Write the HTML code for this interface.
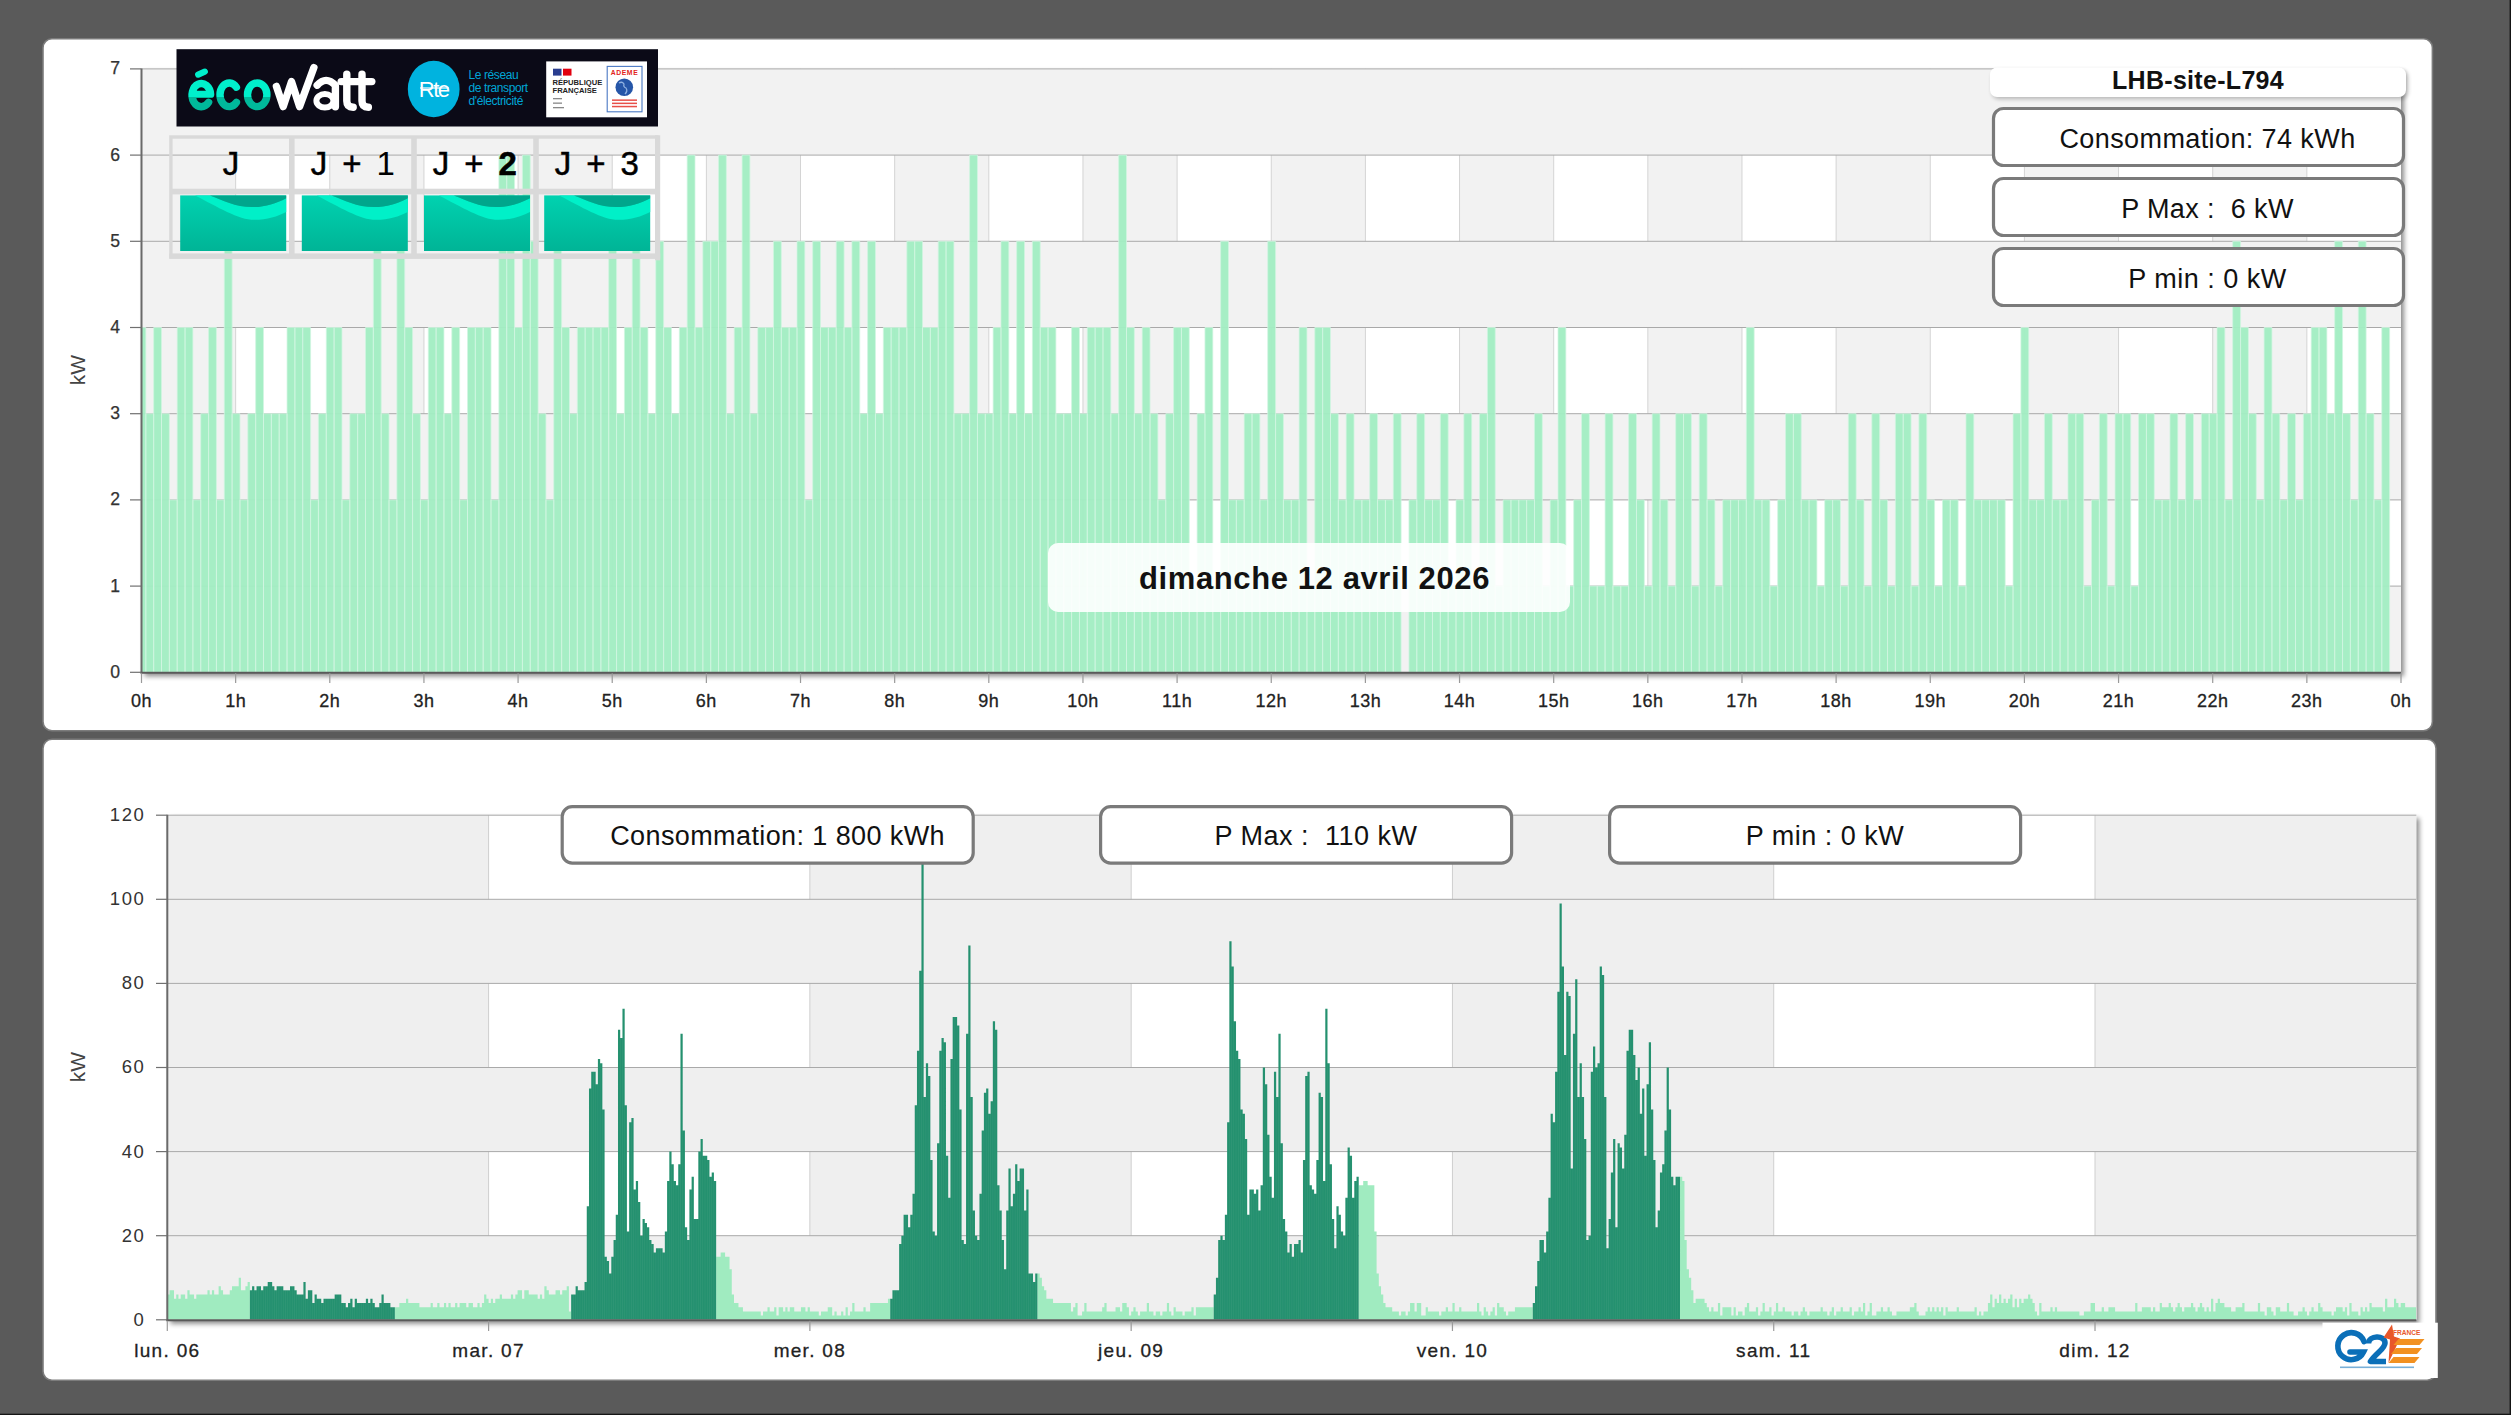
<!DOCTYPE html><html><head><meta charset="utf-8"><style>html,body{margin:0;padding:0;background:#5a5a5a;width:2511px;height:1415px;overflow:hidden;position:relative}</style></head><body><svg width="2511" height="1415" viewBox="0 0 2511 1415" style="position:absolute;left:0;top:0">
<defs><filter id="blur3" x="-10%" y="-10%" width="120%" height="120%"><feGaussianBlur stdDeviation="2.6"/></filter><filter id="blur2" x="-10%" y="-50%" width="120%" height="200%"><feGaussianBlur stdDeviation="1.8"/></filter><clipPath id="ctop"><rect x="141.5" y="68.89999999999998" width="2259.5" height="603.4"/></clipPath><clipPath id="cbot"><rect x="167.3" y="815.1999999999999" width="2249.0" height="504.6"/></clipPath><linearGradient id="wave" x1="0" y1="0" x2="0" y2="1"><stop offset="0" stop-color="#00d2b0"/><stop offset="1" stop-color="#00b496"/></linearGradient><linearGradient id="ecoL" x1="0" y1="0" x2="0" y2="1"><stop offset="0.5" stop-color="#00f0cc"/><stop offset="0.5" stop-color="#00b99a"/></linearGradient></defs>
<rect x="43" y="38.8" width="2389.4" height="692" rx="9" fill="#ffffff" stroke="#7c7c7c" stroke-width="1.6"/>
<rect x="43" y="739.2" width="2393" height="641" rx="9" fill="#ffffff" stroke="#7c7c7c" stroke-width="1.6"/>
<rect x="144.5" y="71.89999999999998" width="2259.5" height="604.4" fill="#000" opacity="0.45" filter="url(#blur3)"/>
<rect x="141.5" y="68.89999999999998" width="2259.5" height="603.4" fill="#ffffff"/>
<rect x="141.50" y="68.90" width="94.15" height="603.40" fill="#f2f2f2"/>
<rect x="329.79" y="68.90" width="94.15" height="603.40" fill="#f2f2f2"/>
<rect x="518.08" y="68.90" width="94.15" height="603.40" fill="#f2f2f2"/>
<rect x="706.38" y="68.90" width="94.15" height="603.40" fill="#f2f2f2"/>
<rect x="894.67" y="68.90" width="94.15" height="603.40" fill="#f2f2f2"/>
<rect x="1082.96" y="68.90" width="94.15" height="603.40" fill="#f2f2f2"/>
<rect x="1271.25" y="68.90" width="94.15" height="603.40" fill="#f2f2f2"/>
<rect x="1459.54" y="68.90" width="94.15" height="603.40" fill="#f2f2f2"/>
<rect x="1647.83" y="68.90" width="94.15" height="603.40" fill="#f2f2f2"/>
<rect x="1836.12" y="68.90" width="94.15" height="603.40" fill="#f2f2f2"/>
<rect x="2024.42" y="68.90" width="94.15" height="603.40" fill="#f2f2f2"/>
<rect x="2212.71" y="68.90" width="94.15" height="603.40" fill="#f2f2f2"/>
<line x1="235.65" y1="68.90" x2="235.65" y2="672.30" stroke="#d4d4d4" stroke-width="1"/>
<line x1="329.79" y1="68.90" x2="329.79" y2="672.30" stroke="#d4d4d4" stroke-width="1"/>
<line x1="423.94" y1="68.90" x2="423.94" y2="672.30" stroke="#d4d4d4" stroke-width="1"/>
<line x1="518.08" y1="68.90" x2="518.08" y2="672.30" stroke="#d4d4d4" stroke-width="1"/>
<line x1="612.23" y1="68.90" x2="612.23" y2="672.30" stroke="#d4d4d4" stroke-width="1"/>
<line x1="706.38" y1="68.90" x2="706.38" y2="672.30" stroke="#d4d4d4" stroke-width="1"/>
<line x1="800.52" y1="68.90" x2="800.52" y2="672.30" stroke="#d4d4d4" stroke-width="1"/>
<line x1="894.67" y1="68.90" x2="894.67" y2="672.30" stroke="#d4d4d4" stroke-width="1"/>
<line x1="988.81" y1="68.90" x2="988.81" y2="672.30" stroke="#d4d4d4" stroke-width="1"/>
<line x1="1082.96" y1="68.90" x2="1082.96" y2="672.30" stroke="#d4d4d4" stroke-width="1"/>
<line x1="1177.10" y1="68.90" x2="1177.10" y2="672.30" stroke="#d4d4d4" stroke-width="1"/>
<line x1="1271.25" y1="68.90" x2="1271.25" y2="672.30" stroke="#d4d4d4" stroke-width="1"/>
<line x1="1365.40" y1="68.90" x2="1365.40" y2="672.30" stroke="#d4d4d4" stroke-width="1"/>
<line x1="1459.54" y1="68.90" x2="1459.54" y2="672.30" stroke="#d4d4d4" stroke-width="1"/>
<line x1="1553.69" y1="68.90" x2="1553.69" y2="672.30" stroke="#d4d4d4" stroke-width="1"/>
<line x1="1647.83" y1="68.90" x2="1647.83" y2="672.30" stroke="#d4d4d4" stroke-width="1"/>
<line x1="1741.98" y1="68.90" x2="1741.98" y2="672.30" stroke="#d4d4d4" stroke-width="1"/>
<line x1="1836.12" y1="68.90" x2="1836.12" y2="672.30" stroke="#d4d4d4" stroke-width="1"/>
<line x1="1930.27" y1="68.90" x2="1930.27" y2="672.30" stroke="#d4d4d4" stroke-width="1"/>
<line x1="2024.42" y1="68.90" x2="2024.42" y2="672.30" stroke="#d4d4d4" stroke-width="1"/>
<line x1="2118.56" y1="68.90" x2="2118.56" y2="672.30" stroke="#d4d4d4" stroke-width="1"/>
<line x1="2212.71" y1="68.90" x2="2212.71" y2="672.30" stroke="#d4d4d4" stroke-width="1"/>
<line x1="2306.85" y1="68.90" x2="2306.85" y2="672.30" stroke="#d4d4d4" stroke-width="1"/>
<rect x="141.5" y="586.10" width="2259.50" height="86.20" fill="#f2f2f2"/>
<rect x="141.5" y="413.70" width="2259.50" height="86.20" fill="#f2f2f2"/>
<rect x="141.5" y="241.30" width="2259.50" height="86.20" fill="#f2f2f2"/>
<rect x="141.5" y="68.90" width="2259.50" height="86.20" fill="#f2f2f2"/>
<line x1="141.5" y1="586.10" x2="2401.0" y2="586.10" stroke="#a9a9a9" stroke-width="1"/>
<line x1="141.5" y1="499.90" x2="2401.0" y2="499.90" stroke="#a9a9a9" stroke-width="1"/>
<line x1="141.5" y1="413.70" x2="2401.0" y2="413.70" stroke="#a9a9a9" stroke-width="1"/>
<line x1="141.5" y1="327.50" x2="2401.0" y2="327.50" stroke="#a9a9a9" stroke-width="1"/>
<line x1="141.5" y1="241.30" x2="2401.0" y2="241.30" stroke="#a9a9a9" stroke-width="1"/>
<line x1="141.5" y1="155.10" x2="2401.0" y2="155.10" stroke="#a9a9a9" stroke-width="1"/>
<line x1="141.5" y1="68.90" x2="2401.0" y2="68.90" stroke="#a9a9a9" stroke-width="1"/>
<g clip-path="url(#ctop)"><path d="M137.98 672.30V327.50H145.82V672.30ZM145.82 672.30V413.70H153.67V672.30ZM153.67 672.30V327.50H161.51V672.30ZM161.51 672.30V413.70H169.36V672.30ZM169.36 672.30V499.90H177.20V672.30ZM177.20 672.30V327.50H185.05V672.30ZM185.05 672.30V327.50H192.90V672.30ZM192.90 672.30V499.90H200.74V672.30ZM200.74 672.30V413.70H208.59V672.30ZM208.59 672.30V327.50H216.43V672.30ZM216.43 672.30V499.90H224.28V672.30ZM224.28 672.30V241.30H232.12V672.30ZM232.12 672.30V413.70H239.97V672.30ZM239.97 672.30V499.90H247.81V672.30ZM247.81 672.30V413.70H255.66V672.30ZM255.66 672.30V327.50H263.51V672.30ZM263.51 672.30V413.70H271.35V672.30ZM271.35 672.30V413.70H279.20V672.30ZM279.20 672.30V413.70H287.04V672.30ZM287.04 672.30V327.50H294.89V672.30ZM294.89 672.30V327.50H302.73V672.30ZM302.73 672.30V327.50H310.58V672.30ZM310.58 672.30V499.90H318.42V672.30ZM318.42 672.30V413.70H326.27V672.30ZM326.27 672.30V327.50H334.11V672.30ZM334.11 672.30V327.50H341.96V672.30ZM341.96 672.30V499.90H349.81V672.30ZM349.81 672.30V413.70H357.65V672.30ZM357.65 672.30V413.70H365.50V672.30ZM365.50 672.30V327.50H373.34V672.30ZM373.34 672.30V241.30H381.19V672.30ZM381.19 672.30V413.70H389.03V672.30ZM389.03 672.30V499.90H396.88V672.30ZM396.88 672.30V241.30H404.72V672.30ZM404.72 672.30V327.50H412.57V672.30ZM412.57 672.30V413.70H420.41V672.30ZM420.41 672.30V499.90H428.26V672.30ZM428.26 672.30V327.50H436.11V672.30ZM436.11 672.30V327.50H443.95V672.30ZM443.95 672.30V413.70H451.80V672.30ZM451.80 672.30V327.50H459.64V672.30ZM459.64 672.30V499.90H467.49V672.30ZM467.49 672.30V327.50H475.33V672.30ZM475.33 672.30V327.50H483.18V672.30ZM483.18 672.30V327.50H491.02V672.30ZM491.02 672.30V499.90H498.87V672.30ZM498.87 672.30V155.10H506.72V672.30ZM506.72 672.30V155.10H514.56V672.30ZM514.56 672.30V327.50H522.41V672.30ZM522.41 672.30V155.10H530.25V672.30ZM530.25 672.30V241.30H538.10V672.30ZM538.10 672.30V413.70H545.94V672.30ZM545.94 672.30V499.90H553.79V672.30ZM553.79 672.30V241.30H561.63V672.30ZM561.63 672.30V327.50H569.48V672.30ZM569.48 672.30V413.70H577.32V672.30ZM577.32 672.30V327.50H585.17V672.30ZM585.17 672.30V327.50H593.02V672.30ZM593.02 672.30V327.50H600.86V672.30ZM600.86 672.30V327.50H608.71V672.30ZM608.71 672.30V241.30H616.55V672.30ZM616.55 672.30V413.70H624.40V672.30ZM624.40 672.30V327.50H632.24V672.30ZM632.24 672.30V241.30H640.09V672.30ZM640.09 672.30V327.50H647.93V672.30ZM647.93 672.30V413.70H655.78V672.30ZM655.78 672.30V241.30H663.62V672.30ZM663.62 672.30V327.50H671.47V672.30ZM671.47 672.30V413.70H679.32V672.30ZM679.32 672.30V327.50H687.16V672.30ZM687.16 672.30V155.10H695.01V672.30ZM695.01 672.30V327.50H702.85V672.30ZM702.85 672.30V241.30H710.70V672.30ZM710.70 672.30V241.30H718.54V672.30ZM718.54 672.30V155.10H726.39V672.30ZM726.39 672.30V413.70H734.23V672.30ZM734.23 672.30V327.50H742.08V672.30ZM742.08 672.30V155.10H749.93V672.30ZM749.93 672.30V413.70H757.77V672.30ZM757.77 672.30V327.50H765.62V672.30ZM765.62 672.30V327.50H773.46V672.30ZM773.46 672.30V241.30H781.31V672.30ZM781.31 672.30V327.50H789.15V672.30ZM789.15 672.30V327.50H797.00V672.30ZM797.00 672.30V241.30H804.84V672.30ZM804.84 672.30V499.90H812.69V672.30ZM812.69 672.30V241.30H820.53V672.30ZM820.53 672.30V327.50H828.38V672.30ZM828.38 672.30V327.50H836.23V672.30ZM836.23 672.30V241.30H844.07V672.30ZM844.07 672.30V327.50H851.92V672.30ZM851.92 672.30V241.30H859.76V672.30ZM859.76 672.30V413.70H867.61V672.30ZM867.61 672.30V241.30H875.45V672.30ZM875.45 672.30V413.70H883.30V672.30ZM883.30 672.30V327.50H891.14V672.30ZM891.14 672.30V327.50H898.99V672.30ZM898.99 672.30V327.50H906.83V672.30ZM906.83 672.30V241.30H914.68V672.30ZM914.68 672.30V241.30H922.53V672.30ZM922.53 672.30V327.50H930.37V672.30ZM930.37 672.30V327.50H938.22V672.30ZM938.22 672.30V241.30H946.06V672.30ZM946.06 672.30V241.30H953.91V672.30ZM953.91 672.30V413.70H961.75V672.30ZM961.75 672.30V413.70H969.60V672.30ZM969.60 672.30V155.10H977.44V672.30ZM977.44 672.30V413.70H985.29V672.30ZM985.29 672.30V413.70H993.14V672.30ZM993.14 672.30V327.50H1000.98V672.30ZM1000.98 672.30V241.30H1008.83V672.30ZM1008.83 672.30V413.70H1016.67V672.30ZM1016.67 672.30V241.30H1024.52V672.30ZM1024.52 672.30V413.70H1032.36V672.30ZM1032.36 672.30V241.30H1040.21V672.30ZM1040.21 672.30V327.50H1048.05V672.30ZM1048.05 672.30V327.50H1055.90V672.30ZM1055.90 672.30V413.70H1063.74V672.30ZM1063.74 672.30V413.70H1071.59V672.30ZM1071.59 672.30V327.50H1079.44V672.30ZM1079.44 672.30V413.70H1087.28V672.30ZM1087.28 672.30V327.50H1095.13V672.30ZM1095.13 672.30V327.50H1102.97V672.30ZM1102.97 672.30V327.50H1110.82V672.30ZM1110.82 672.30V413.70H1118.66V672.30ZM1118.66 672.30V155.10H1126.51V672.30ZM1126.51 672.30V327.50H1134.35V672.30ZM1134.35 672.30V413.70H1142.20V672.30ZM1142.20 672.30V327.50H1150.04V672.30ZM1150.04 672.30V413.70H1157.89V672.30ZM1157.89 672.30V499.90H1165.74V672.30ZM1165.74 672.30V413.70H1173.58V672.30ZM1173.58 672.30V327.50H1181.43V672.30ZM1181.43 672.30V327.50H1189.27V672.30ZM1189.27 672.30V586.10H1197.12V672.30ZM1197.12 672.30V413.70H1204.96V672.30ZM1204.96 672.30V327.50H1212.81V672.30ZM1212.81 672.30V586.10H1220.65V672.30ZM1220.65 672.30V241.30H1228.50V672.30ZM1228.50 672.30V499.90H1236.35V672.30ZM1236.35 672.30V499.90H1244.19V672.30ZM1244.19 672.30V413.70H1252.04V672.30ZM1252.04 672.30V413.70H1259.88V672.30ZM1259.88 672.30V499.90H1267.73V672.30ZM1267.73 672.30V241.30H1275.57V672.30ZM1275.57 672.30V413.70H1283.42V672.30ZM1283.42 672.30V499.90H1291.26V672.30ZM1291.26 672.30V499.90H1299.11V672.30ZM1299.11 672.30V327.50H1306.95V672.30ZM1306.95 672.30V586.10H1314.80V672.30ZM1314.80 672.30V327.50H1322.65V672.30ZM1322.65 672.30V327.50H1330.49V672.30ZM1330.49 672.30V413.70H1338.34V672.30ZM1338.34 672.30V499.90H1346.18V672.30ZM1346.18 672.30V413.70H1354.03V672.30ZM1354.03 672.30V499.90H1361.87V672.30ZM1361.87 672.30V499.90H1369.72V672.30ZM1369.72 672.30V413.70H1377.56V672.30ZM1377.56 672.30V499.90H1385.41V672.30ZM1385.41 672.30V499.90H1393.26V672.30ZM1393.26 672.30V413.70H1401.10V672.30ZM1408.95 672.30V499.90H1416.79V672.30ZM1416.79 672.30V413.70H1424.64V672.30ZM1424.64 672.30V499.90H1432.48V672.30ZM1432.48 672.30V499.90H1440.33V672.30ZM1440.33 672.30V413.70H1448.17V672.30ZM1448.17 672.30V586.10H1456.02V672.30ZM1456.02 672.30V499.90H1463.86V672.30ZM1463.86 672.30V413.70H1471.71V672.30ZM1471.71 672.30V586.10H1479.56V672.30ZM1479.56 672.30V413.70H1487.40V672.30ZM1487.40 672.30V327.50H1495.25V672.30ZM1495.25 672.30V586.10H1503.09V672.30ZM1503.09 672.30V499.90H1510.94V672.30ZM1510.94 672.30V499.90H1518.78V672.30ZM1518.78 672.30V499.90H1526.63V672.30ZM1526.63 672.30V499.90H1534.47V672.30ZM1534.47 672.30V413.70H1542.32V672.30ZM1542.32 672.30V586.10H1550.16V672.30ZM1550.16 672.30V499.90H1558.01V672.30ZM1558.01 672.30V327.50H1565.86V672.30ZM1565.86 672.30V586.10H1573.70V672.30ZM1573.70 672.30V499.90H1581.55V672.30ZM1581.55 672.30V413.70H1589.39V672.30ZM1589.39 672.30V586.10H1597.24V672.30ZM1597.24 672.30V586.10H1605.08V672.30ZM1605.08 672.30V413.70H1612.93V672.30ZM1612.93 672.30V586.10H1620.77V672.30ZM1620.77 672.30V586.10H1628.62V672.30ZM1628.62 672.30V413.70H1636.47V672.30ZM1636.47 672.30V499.90H1644.31V672.30ZM1644.31 672.30V586.10H1652.16V672.30ZM1652.16 672.30V413.70H1660.00V672.30ZM1660.00 672.30V499.90H1667.85V672.30ZM1667.85 672.30V586.10H1675.69V672.30ZM1675.69 672.30V413.70H1683.54V672.30ZM1683.54 672.30V413.70H1691.38V672.30ZM1691.38 672.30V586.10H1699.23V672.30ZM1699.23 672.30V413.70H1707.07V672.30ZM1707.07 672.30V499.90H1714.92V672.30ZM1714.92 672.30V586.10H1722.77V672.30ZM1722.77 672.30V499.90H1730.61V672.30ZM1730.61 672.30V499.90H1738.46V672.30ZM1738.46 672.30V499.90H1746.30V672.30ZM1746.30 672.30V327.50H1754.15V672.30ZM1754.15 672.30V499.90H1761.99V672.30ZM1761.99 672.30V499.90H1769.84V672.30ZM1769.84 672.30V586.10H1777.68V672.30ZM1777.68 672.30V499.90H1785.53V672.30ZM1785.53 672.30V413.70H1793.37V672.30ZM1793.37 672.30V413.70H1801.22V672.30ZM1801.22 672.30V499.90H1809.07V672.30ZM1809.07 672.30V499.90H1816.91V672.30ZM1816.91 672.30V586.10H1824.76V672.30ZM1824.76 672.30V499.90H1832.60V672.30ZM1832.60 672.30V499.90H1840.45V672.30ZM1840.45 672.30V586.10H1848.29V672.30ZM1848.29 672.30V413.70H1856.14V672.30ZM1856.14 672.30V499.90H1863.98V672.30ZM1863.98 672.30V586.10H1871.83V672.30ZM1871.83 672.30V413.70H1879.68V672.30ZM1879.68 672.30V499.90H1887.52V672.30ZM1887.52 672.30V586.10H1895.37V672.30ZM1895.37 672.30V413.70H1903.21V672.30ZM1903.21 672.30V413.70H1911.06V672.30ZM1911.06 672.30V586.10H1918.90V672.30ZM1918.90 672.30V413.70H1926.75V672.30ZM1926.75 672.30V499.90H1934.59V672.30ZM1934.59 672.30V586.10H1942.44V672.30ZM1942.44 672.30V499.90H1950.28V672.30ZM1950.28 672.30V499.90H1958.13V672.30ZM1958.13 672.30V586.10H1965.98V672.30ZM1965.98 672.30V413.70H1973.82V672.30ZM1973.82 672.30V499.90H1981.67V672.30ZM1981.67 672.30V499.90H1989.51V672.30ZM1989.51 672.30V499.90H1997.36V672.30ZM1997.36 672.30V499.90H2005.20V672.30ZM2005.20 672.30V586.10H2013.05V672.30ZM2013.05 672.30V413.70H2020.89V672.30ZM2020.89 672.30V327.50H2028.74V672.30ZM2028.74 672.30V499.90H2036.58V672.30ZM2036.58 672.30V499.90H2044.43V672.30ZM2044.43 672.30V413.70H2052.28V672.30ZM2052.28 672.30V499.90H2060.12V672.30ZM2060.12 672.30V499.90H2067.97V672.30ZM2067.97 672.30V413.70H2075.81V672.30ZM2075.81 672.30V413.70H2083.66V672.30ZM2083.66 672.30V586.10H2091.50V672.30ZM2091.50 672.30V499.90H2099.35V672.30ZM2099.35 672.30V413.70H2107.19V672.30ZM2107.19 672.30V586.10H2115.04V672.30ZM2115.04 672.30V413.70H2122.89V672.30ZM2122.89 672.30V413.70H2130.73V672.30ZM2130.73 672.30V586.10H2138.58V672.30ZM2138.58 672.30V413.70H2146.42V672.30ZM2146.42 672.30V413.70H2154.27V672.30ZM2154.27 672.30V499.90H2162.11V672.30ZM2162.11 672.30V499.90H2169.96V672.30ZM2169.96 672.30V413.70H2177.80V672.30ZM2177.80 672.30V499.90H2185.65V672.30ZM2185.65 672.30V413.70H2193.49V672.30ZM2193.49 672.30V499.90H2201.34V672.30ZM2201.34 672.30V413.70H2209.19V672.30ZM2209.19 672.30V413.70H2217.03V672.30ZM2217.03 672.30V327.50H2224.88V672.30ZM2224.88 672.30V499.90H2232.72V672.30ZM2232.72 672.30V241.30H2240.57V672.30ZM2240.57 672.30V327.50H2248.41V672.30ZM2248.41 672.30V413.70H2256.26V672.30ZM2256.26 672.30V499.90H2264.10V672.30ZM2264.10 672.30V327.50H2271.95V672.30ZM2271.95 672.30V413.70H2279.79V672.30ZM2279.79 672.30V499.90H2287.64V672.30ZM2287.64 672.30V413.70H2295.49V672.30ZM2295.49 672.30V499.90H2303.33V672.30ZM2303.33 672.30V413.70H2311.18V672.30ZM2311.18 672.30V327.50H2319.02V672.30ZM2319.02 672.30V327.50H2326.87V672.30ZM2326.87 672.30V413.70H2334.71V672.30ZM2334.71 672.30V241.30H2342.56V672.30ZM2342.56 672.30V413.70H2350.40V672.30ZM2350.40 672.30V499.90H2358.25V672.30ZM2358.25 672.30V241.30H2366.10V672.30ZM2366.10 672.30V413.70H2373.94V672.30ZM2373.94 672.30V499.90H2381.79V672.30ZM2381.79 672.30V327.50H2389.63V672.30Z" fill="#a2edc3" fill-opacity="0.96" stroke="#d2f5e1" stroke-opacity="0.75" stroke-width="1"/></g>
<line x1="141.5" y1="68.40" x2="141.5" y2="673.30" stroke="#6a6a6a" stroke-width="2"/>
<line x1="140.5" y1="672.80" x2="2401.0" y2="672.80" stroke="#5a5a5a" stroke-width="2"/>
<line x1="130" y1="672.30" x2="141.5" y2="672.30" stroke="#707070" stroke-width="1.2"/>
<text x="120" y="677.70" text-anchor="end" font-family='"Liberation Sans", sans-serif' font-size="17.6" fill="#333" stroke="#333" stroke-width="0.25">0</text>
<line x1="130" y1="586.10" x2="141.5" y2="586.10" stroke="#707070" stroke-width="1.2"/>
<text x="120" y="591.50" text-anchor="end" font-family='"Liberation Sans", sans-serif' font-size="17.6" fill="#333" stroke="#333" stroke-width="0.25">1</text>
<line x1="130" y1="499.90" x2="141.5" y2="499.90" stroke="#707070" stroke-width="1.2"/>
<text x="120" y="505.30" text-anchor="end" font-family='"Liberation Sans", sans-serif' font-size="17.6" fill="#333" stroke="#333" stroke-width="0.25">2</text>
<line x1="130" y1="413.70" x2="141.5" y2="413.70" stroke="#707070" stroke-width="1.2"/>
<text x="120" y="419.10" text-anchor="end" font-family='"Liberation Sans", sans-serif' font-size="17.6" fill="#333" stroke="#333" stroke-width="0.25">3</text>
<line x1="130" y1="327.50" x2="141.5" y2="327.50" stroke="#707070" stroke-width="1.2"/>
<text x="120" y="332.90" text-anchor="end" font-family='"Liberation Sans", sans-serif' font-size="17.6" fill="#333" stroke="#333" stroke-width="0.25">4</text>
<line x1="130" y1="241.30" x2="141.5" y2="241.30" stroke="#707070" stroke-width="1.2"/>
<text x="120" y="246.70" text-anchor="end" font-family='"Liberation Sans", sans-serif' font-size="17.6" fill="#333" stroke="#333" stroke-width="0.25">5</text>
<line x1="130" y1="155.10" x2="141.5" y2="155.10" stroke="#707070" stroke-width="1.2"/>
<text x="120" y="160.50" text-anchor="end" font-family='"Liberation Sans", sans-serif' font-size="17.6" fill="#333" stroke="#333" stroke-width="0.25">6</text>
<line x1="130" y1="68.90" x2="141.5" y2="68.90" stroke="#707070" stroke-width="1.2"/>
<text x="120" y="74.30" text-anchor="end" font-family='"Liberation Sans", sans-serif' font-size="17.6" fill="#333" stroke="#333" stroke-width="0.25">7</text>
<line x1="141.50" y1="673.30" x2="141.50" y2="683" stroke="#9a9a9a" stroke-width="1.2"/>
<text x="141.50" y="707" text-anchor="middle" font-family='"Liberation Sans", sans-serif' font-size="18" letter-spacing="0.5" fill="#222" stroke="#222" stroke-width="0.3">0h</text>
<line x1="235.65" y1="673.30" x2="235.65" y2="683" stroke="#9a9a9a" stroke-width="1.2"/>
<text x="235.65" y="707" text-anchor="middle" font-family='"Liberation Sans", sans-serif' font-size="18" letter-spacing="0.5" fill="#222" stroke="#222" stroke-width="0.3">1h</text>
<line x1="329.79" y1="673.30" x2="329.79" y2="683" stroke="#9a9a9a" stroke-width="1.2"/>
<text x="329.79" y="707" text-anchor="middle" font-family='"Liberation Sans", sans-serif' font-size="18" letter-spacing="0.5" fill="#222" stroke="#222" stroke-width="0.3">2h</text>
<line x1="423.94" y1="673.30" x2="423.94" y2="683" stroke="#9a9a9a" stroke-width="1.2"/>
<text x="423.94" y="707" text-anchor="middle" font-family='"Liberation Sans", sans-serif' font-size="18" letter-spacing="0.5" fill="#222" stroke="#222" stroke-width="0.3">3h</text>
<line x1="518.08" y1="673.30" x2="518.08" y2="683" stroke="#9a9a9a" stroke-width="1.2"/>
<text x="518.08" y="707" text-anchor="middle" font-family='"Liberation Sans", sans-serif' font-size="18" letter-spacing="0.5" fill="#222" stroke="#222" stroke-width="0.3">4h</text>
<line x1="612.23" y1="673.30" x2="612.23" y2="683" stroke="#9a9a9a" stroke-width="1.2"/>
<text x="612.23" y="707" text-anchor="middle" font-family='"Liberation Sans", sans-serif' font-size="18" letter-spacing="0.5" fill="#222" stroke="#222" stroke-width="0.3">5h</text>
<line x1="706.38" y1="673.30" x2="706.38" y2="683" stroke="#9a9a9a" stroke-width="1.2"/>
<text x="706.38" y="707" text-anchor="middle" font-family='"Liberation Sans", sans-serif' font-size="18" letter-spacing="0.5" fill="#222" stroke="#222" stroke-width="0.3">6h</text>
<line x1="800.52" y1="673.30" x2="800.52" y2="683" stroke="#9a9a9a" stroke-width="1.2"/>
<text x="800.52" y="707" text-anchor="middle" font-family='"Liberation Sans", sans-serif' font-size="18" letter-spacing="0.5" fill="#222" stroke="#222" stroke-width="0.3">7h</text>
<line x1="894.67" y1="673.30" x2="894.67" y2="683" stroke="#9a9a9a" stroke-width="1.2"/>
<text x="894.67" y="707" text-anchor="middle" font-family='"Liberation Sans", sans-serif' font-size="18" letter-spacing="0.5" fill="#222" stroke="#222" stroke-width="0.3">8h</text>
<line x1="988.81" y1="673.30" x2="988.81" y2="683" stroke="#9a9a9a" stroke-width="1.2"/>
<text x="988.81" y="707" text-anchor="middle" font-family='"Liberation Sans", sans-serif' font-size="18" letter-spacing="0.5" fill="#222" stroke="#222" stroke-width="0.3">9h</text>
<line x1="1082.96" y1="673.30" x2="1082.96" y2="683" stroke="#9a9a9a" stroke-width="1.2"/>
<text x="1082.96" y="707" text-anchor="middle" font-family='"Liberation Sans", sans-serif' font-size="18" letter-spacing="0.5" fill="#222" stroke="#222" stroke-width="0.3">10h</text>
<line x1="1177.10" y1="673.30" x2="1177.10" y2="683" stroke="#9a9a9a" stroke-width="1.2"/>
<text x="1177.10" y="707" text-anchor="middle" font-family='"Liberation Sans", sans-serif' font-size="18" letter-spacing="0.5" fill="#222" stroke="#222" stroke-width="0.3">11h</text>
<line x1="1271.25" y1="673.30" x2="1271.25" y2="683" stroke="#9a9a9a" stroke-width="1.2"/>
<text x="1271.25" y="707" text-anchor="middle" font-family='"Liberation Sans", sans-serif' font-size="18" letter-spacing="0.5" fill="#222" stroke="#222" stroke-width="0.3">12h</text>
<line x1="1365.40" y1="673.30" x2="1365.40" y2="683" stroke="#9a9a9a" stroke-width="1.2"/>
<text x="1365.40" y="707" text-anchor="middle" font-family='"Liberation Sans", sans-serif' font-size="18" letter-spacing="0.5" fill="#222" stroke="#222" stroke-width="0.3">13h</text>
<line x1="1459.54" y1="673.30" x2="1459.54" y2="683" stroke="#9a9a9a" stroke-width="1.2"/>
<text x="1459.54" y="707" text-anchor="middle" font-family='"Liberation Sans", sans-serif' font-size="18" letter-spacing="0.5" fill="#222" stroke="#222" stroke-width="0.3">14h</text>
<line x1="1553.69" y1="673.30" x2="1553.69" y2="683" stroke="#9a9a9a" stroke-width="1.2"/>
<text x="1553.69" y="707" text-anchor="middle" font-family='"Liberation Sans", sans-serif' font-size="18" letter-spacing="0.5" fill="#222" stroke="#222" stroke-width="0.3">15h</text>
<line x1="1647.83" y1="673.30" x2="1647.83" y2="683" stroke="#9a9a9a" stroke-width="1.2"/>
<text x="1647.83" y="707" text-anchor="middle" font-family='"Liberation Sans", sans-serif' font-size="18" letter-spacing="0.5" fill="#222" stroke="#222" stroke-width="0.3">16h</text>
<line x1="1741.98" y1="673.30" x2="1741.98" y2="683" stroke="#9a9a9a" stroke-width="1.2"/>
<text x="1741.98" y="707" text-anchor="middle" font-family='"Liberation Sans", sans-serif' font-size="18" letter-spacing="0.5" fill="#222" stroke="#222" stroke-width="0.3">17h</text>
<line x1="1836.12" y1="673.30" x2="1836.12" y2="683" stroke="#9a9a9a" stroke-width="1.2"/>
<text x="1836.12" y="707" text-anchor="middle" font-family='"Liberation Sans", sans-serif' font-size="18" letter-spacing="0.5" fill="#222" stroke="#222" stroke-width="0.3">18h</text>
<line x1="1930.27" y1="673.30" x2="1930.27" y2="683" stroke="#9a9a9a" stroke-width="1.2"/>
<text x="1930.27" y="707" text-anchor="middle" font-family='"Liberation Sans", sans-serif' font-size="18" letter-spacing="0.5" fill="#222" stroke="#222" stroke-width="0.3">19h</text>
<line x1="2024.42" y1="673.30" x2="2024.42" y2="683" stroke="#9a9a9a" stroke-width="1.2"/>
<text x="2024.42" y="707" text-anchor="middle" font-family='"Liberation Sans", sans-serif' font-size="18" letter-spacing="0.5" fill="#222" stroke="#222" stroke-width="0.3">20h</text>
<line x1="2118.56" y1="673.30" x2="2118.56" y2="683" stroke="#9a9a9a" stroke-width="1.2"/>
<text x="2118.56" y="707" text-anchor="middle" font-family='"Liberation Sans", sans-serif' font-size="18" letter-spacing="0.5" fill="#222" stroke="#222" stroke-width="0.3">21h</text>
<line x1="2212.71" y1="673.30" x2="2212.71" y2="683" stroke="#9a9a9a" stroke-width="1.2"/>
<text x="2212.71" y="707" text-anchor="middle" font-family='"Liberation Sans", sans-serif' font-size="18" letter-spacing="0.5" fill="#222" stroke="#222" stroke-width="0.3">22h</text>
<line x1="2306.85" y1="673.30" x2="2306.85" y2="683" stroke="#9a9a9a" stroke-width="1.2"/>
<text x="2306.85" y="707" text-anchor="middle" font-family='"Liberation Sans", sans-serif' font-size="18" letter-spacing="0.5" fill="#222" stroke="#222" stroke-width="0.3">23h</text>
<line x1="2401.00" y1="673.30" x2="2401.00" y2="683" stroke="#9a9a9a" stroke-width="1.2"/>
<text x="2401.00" y="707" text-anchor="middle" font-family='"Liberation Sans", sans-serif' font-size="18" letter-spacing="0.5" fill="#222" stroke="#222" stroke-width="0.3">0h</text>
<text x="0" y="0" transform="translate(84.5,370) rotate(-90)" text-anchor="middle" font-family='"Liberation Sans", sans-serif' font-size="21" fill="#444">kW</text>
<rect x="170.3" y="818.1999999999999" width="2249.0" height="505.6" fill="#000" opacity="0.45" filter="url(#blur3)"/>
<rect x="167.3" y="815.20" width="2249.00" height="504.60" fill="#ffffff"/>
<rect x="167.30" y="815.20" width="321.29" height="504.60" fill="#efefef"/>
<rect x="809.87" y="815.20" width="321.29" height="504.60" fill="#efefef"/>
<rect x="1452.44" y="815.20" width="321.29" height="504.60" fill="#efefef"/>
<rect x="2095.01" y="815.20" width="321.29" height="504.60" fill="#efefef"/>
<line x1="488.59" y1="815.20" x2="488.59" y2="1319.80" stroke="#cfcfcf" stroke-width="1"/>
<line x1="809.87" y1="815.20" x2="809.87" y2="1319.80" stroke="#cfcfcf" stroke-width="1"/>
<line x1="1131.16" y1="815.20" x2="1131.16" y2="1319.80" stroke="#cfcfcf" stroke-width="1"/>
<line x1="1452.44" y1="815.20" x2="1452.44" y2="1319.80" stroke="#cfcfcf" stroke-width="1"/>
<line x1="1773.73" y1="815.20" x2="1773.73" y2="1319.80" stroke="#cfcfcf" stroke-width="1"/>
<line x1="2095.01" y1="815.20" x2="2095.01" y2="1319.80" stroke="#cfcfcf" stroke-width="1"/>
<rect x="167.3" y="1235.70" width="2249.00" height="84.10" fill="#efefef"/>
<rect x="167.3" y="1067.50" width="2249.00" height="84.10" fill="#efefef"/>
<rect x="167.3" y="899.30" width="2249.00" height="84.10" fill="#efefef"/>
<line x1="167.3" y1="1235.70" x2="2416.3" y2="1235.70" stroke="#a9a9a9" stroke-width="1"/>
<line x1="167.3" y1="1151.60" x2="2416.3" y2="1151.60" stroke="#a9a9a9" stroke-width="1"/>
<line x1="167.3" y1="1067.50" x2="2416.3" y2="1067.50" stroke="#a9a9a9" stroke-width="1"/>
<line x1="167.3" y1="983.40" x2="2416.3" y2="983.40" stroke="#a9a9a9" stroke-width="1"/>
<line x1="167.3" y1="899.30" x2="2416.3" y2="899.30" stroke="#a9a9a9" stroke-width="1"/>
<line x1="167.3" y1="815.20" x2="2416.3" y2="815.20" stroke="#a9a9a9" stroke-width="1"/>
<g clip-path="url(#cbot)"><path d="M167.30 1319.80V1294.57H169.53V1319.80ZM169.53 1319.80V1290.37H171.76V1319.80ZM171.76 1319.80V1290.37H173.99V1319.80ZM173.99 1319.80V1298.77H176.22V1319.80ZM176.22 1319.80V1294.57H178.46V1319.80ZM178.46 1319.80V1298.77H180.69V1319.80ZM180.69 1319.80V1294.57H182.92V1319.80ZM182.92 1319.80V1294.57H185.15V1319.80ZM185.15 1319.80V1298.77H187.38V1319.80ZM187.38 1319.80V1290.37H189.61V1319.80ZM189.61 1319.80V1294.57H191.84V1319.80ZM191.84 1319.80V1294.57H194.07V1319.80ZM194.07 1319.80V1298.77H196.30V1319.80ZM196.30 1319.80V1294.57H198.54V1319.80ZM198.54 1319.80V1294.57H200.77V1319.80ZM200.77 1319.80V1294.57H203.00V1319.80ZM203.00 1319.80V1294.57H205.23V1319.80ZM205.23 1319.80V1294.57H207.46V1319.80ZM207.46 1319.80V1290.37H209.69V1319.80ZM209.69 1319.80V1294.57H211.92V1319.80ZM211.92 1319.80V1290.37H214.15V1319.80ZM214.15 1319.80V1294.57H216.39V1319.80ZM216.39 1319.80V1294.57H218.62V1319.80ZM218.62 1319.80V1286.16H220.85V1319.80ZM220.85 1319.80V1290.37H223.08V1319.80ZM223.08 1319.80V1294.57H225.31V1319.80ZM225.31 1319.80V1294.57H227.54V1319.80ZM227.54 1319.80V1294.57H229.77V1319.80ZM229.77 1319.80V1290.37H232.00V1319.80ZM232.00 1319.80V1286.16H234.23V1319.80ZM234.23 1319.80V1286.16H236.47V1319.80ZM236.47 1319.80V1286.16H238.70V1319.80ZM238.70 1319.80V1277.75H240.93V1319.80ZM240.93 1319.80V1290.37H243.16V1319.80ZM243.16 1319.80V1290.37H245.39V1319.80ZM245.39 1319.80V1286.16H247.62V1319.80ZM247.62 1319.80V1281.95H249.85V1319.80ZM394.88 1319.80V1307.18H397.11V1319.80ZM397.11 1319.80V1307.18H399.34V1319.80ZM399.34 1319.80V1302.98H401.57V1319.80ZM401.57 1319.80V1302.98H403.80V1319.80ZM403.80 1319.80V1302.98H406.03V1319.80ZM406.03 1319.80V1298.77H408.26V1319.80ZM408.26 1319.80V1302.98H410.50V1319.80ZM410.50 1319.80V1302.98H412.73V1319.80ZM412.73 1319.80V1302.98H414.96V1319.80ZM414.96 1319.80V1302.98H417.19V1319.80ZM417.19 1319.80V1302.98H419.42V1319.80ZM419.42 1319.80V1307.18H421.65V1319.80ZM421.65 1319.80V1307.18H423.88V1319.80ZM423.88 1319.80V1307.18H426.11V1319.80ZM426.11 1319.80V1307.18H428.34V1319.80ZM428.34 1319.80V1307.18H430.58V1319.80ZM430.58 1319.80V1302.98H432.81V1319.80ZM432.81 1319.80V1307.18H435.04V1319.80ZM435.04 1319.80V1307.18H437.27V1319.80ZM437.27 1319.80V1302.98H439.50V1319.80ZM439.50 1319.80V1307.18H441.73V1319.80ZM441.73 1319.80V1307.18H443.96V1319.80ZM443.96 1319.80V1302.98H446.19V1319.80ZM446.19 1319.80V1307.18H448.42V1319.80ZM448.43 1319.80V1302.98H450.66V1319.80ZM450.66 1319.80V1307.18H452.89V1319.80ZM452.89 1319.80V1307.18H455.12V1319.80ZM455.12 1319.80V1302.98H457.35V1319.80ZM457.35 1319.80V1307.18H459.58V1319.80ZM459.58 1319.80V1302.98H461.81V1319.80ZM461.81 1319.80V1302.98H464.04V1319.80ZM464.04 1319.80V1302.98H466.27V1319.80ZM466.27 1319.80V1307.18H468.51V1319.80ZM468.51 1319.80V1302.98H470.74V1319.80ZM470.74 1319.80V1302.98H472.97V1319.80ZM472.97 1319.80V1307.18H475.20V1319.80ZM475.20 1319.80V1307.18H477.43V1319.80ZM477.43 1319.80V1302.98H479.66V1319.80ZM479.66 1319.80V1307.18H481.89V1319.80ZM481.89 1319.80V1302.98H484.12V1319.80ZM484.12 1319.80V1294.57H486.35V1319.80ZM486.35 1319.80V1298.77H488.59V1319.80ZM488.59 1319.80V1302.98H490.82V1319.80ZM490.82 1319.80V1298.77H493.05V1319.80ZM493.05 1319.80V1302.98H495.28V1319.80ZM495.28 1319.80V1298.77H497.51V1319.80ZM497.51 1319.80V1298.77H499.74V1319.80ZM499.74 1319.80V1294.57H501.97V1319.80ZM501.97 1319.80V1298.77H504.20V1319.80ZM504.20 1319.80V1298.77H506.43V1319.80ZM506.43 1319.80V1298.77H508.67V1319.80ZM508.67 1319.80V1298.77H510.90V1319.80ZM510.90 1319.80V1294.57H513.13V1319.80ZM513.13 1319.80V1298.77H515.36V1319.80ZM515.36 1319.80V1294.57H517.59V1319.80ZM517.59 1319.80V1290.37H519.82V1319.80ZM519.82 1319.80V1290.37H522.05V1319.80ZM522.05 1319.80V1298.77H524.28V1319.80ZM524.28 1319.80V1290.37H526.52V1319.80ZM526.52 1319.80V1290.37H528.75V1319.80ZM528.75 1319.80V1294.57H530.98V1319.80ZM530.98 1319.80V1294.57H533.21V1319.80ZM533.21 1319.80V1294.57H535.44V1319.80ZM535.44 1319.80V1294.57H537.67V1319.80ZM537.67 1319.80V1298.77H539.90V1319.80ZM539.90 1319.80V1294.57H542.13V1319.80ZM542.13 1319.80V1298.77H544.36V1319.80ZM544.36 1319.80V1286.16H546.60V1319.80ZM546.60 1319.80V1290.37H548.83V1319.80ZM548.83 1319.80V1294.57H551.06V1319.80ZM551.06 1319.80V1294.57H553.29V1319.80ZM553.29 1319.80V1294.57H555.52V1319.80ZM555.52 1319.80V1290.37H557.75V1319.80ZM557.75 1319.80V1290.37H559.98V1319.80ZM559.98 1319.80V1294.57H562.21V1319.80ZM562.21 1319.80V1290.37H564.44V1319.80ZM564.44 1319.80V1290.37H566.68V1319.80ZM566.68 1319.80V1286.16H568.91V1319.80ZM568.91 1319.80V1311.39H571.14V1319.80ZM716.16 1319.80V1256.72H718.39V1319.80ZM718.39 1319.80V1256.72H720.63V1319.80ZM720.63 1319.80V1252.52H722.86V1319.80ZM722.86 1319.80V1252.52H725.09V1319.80ZM725.09 1319.80V1256.72H727.32V1319.80ZM727.32 1319.80V1256.72H729.55V1319.80ZM729.55 1319.80V1269.34H731.78V1319.80ZM731.78 1319.80V1294.57H734.01V1319.80ZM734.01 1319.80V1302.98H736.24V1319.80ZM736.24 1319.80V1302.98H738.47V1319.80ZM738.47 1319.80V1307.18H740.71V1319.80ZM740.71 1319.80V1307.18H742.94V1319.80ZM742.94 1319.80V1311.39H745.17V1319.80ZM745.17 1319.80V1311.39H747.40V1319.80ZM747.40 1319.80V1311.39H749.63V1319.80ZM749.63 1319.80V1311.39H751.86V1319.80ZM751.86 1319.80V1311.39H754.09V1319.80ZM754.09 1319.80V1311.39H756.32V1319.80ZM756.32 1319.80V1311.39H758.55V1319.80ZM758.55 1319.80V1311.39H760.79V1319.80ZM760.79 1319.80V1315.60H763.02V1319.80ZM763.02 1319.80V1311.39H765.25V1319.80ZM765.25 1319.80V1311.39H767.48V1319.80ZM767.48 1319.80V1307.18H769.71V1319.80ZM769.71 1319.80V1311.39H771.94V1319.80ZM771.94 1319.80V1311.39H774.17V1319.80ZM774.17 1319.80V1307.18H776.40V1319.80ZM776.40 1319.80V1315.60H778.64V1319.80ZM778.64 1319.80V1307.18H780.87V1319.80ZM780.87 1319.80V1307.18H783.10V1319.80ZM783.10 1319.80V1311.39H785.33V1319.80ZM785.33 1319.80V1307.18H787.56V1319.80ZM787.56 1319.80V1311.39H789.79V1319.80ZM789.79 1319.80V1307.18H792.02V1319.80ZM792.02 1319.80V1307.18H794.25V1319.80ZM794.25 1319.80V1311.39H796.48V1319.80ZM796.48 1319.80V1311.39H798.72V1319.80ZM798.72 1319.80V1311.39H800.95V1319.80ZM800.95 1319.80V1307.18H803.18V1319.80ZM803.18 1319.80V1307.18H805.41V1319.80ZM805.41 1319.80V1311.39H807.64V1319.80ZM807.64 1319.80V1307.18H809.87V1319.80ZM809.87 1319.80V1311.39H812.10V1319.80ZM812.10 1319.80V1311.39H814.33V1319.80ZM814.33 1319.80V1311.39H816.56V1319.80ZM816.56 1319.80V1311.39H818.80V1319.80ZM818.80 1319.80V1315.60H821.03V1319.80ZM821.03 1319.80V1311.39H823.26V1319.80ZM823.26 1319.80V1311.39H825.49V1319.80ZM825.49 1319.80V1311.39H827.72V1319.80ZM827.72 1319.80V1307.18H829.95V1319.80ZM829.95 1319.80V1307.18H832.18V1319.80ZM832.18 1319.80V1315.60H834.41V1319.80ZM834.41 1319.80V1311.39H836.65V1319.80ZM836.65 1319.80V1315.60H838.88V1319.80ZM838.88 1319.80V1315.60H841.11V1319.80ZM841.11 1319.80V1311.39H843.34V1319.80ZM843.34 1319.80V1315.60H845.57V1319.80ZM845.57 1319.80V1307.18H847.80V1319.80ZM847.80 1319.80V1315.60H850.03V1319.80ZM850.03 1319.80V1311.39H852.26V1319.80ZM852.26 1319.80V1302.98H854.49V1319.80ZM854.49 1319.80V1311.39H856.73V1319.80ZM856.73 1319.80V1311.39H858.96V1319.80ZM858.96 1319.80V1311.39H861.19V1319.80ZM861.19 1319.80V1311.39H863.42V1319.80ZM863.42 1319.80V1307.18H865.65V1319.80ZM865.65 1319.80V1311.39H867.88V1319.80ZM867.88 1319.80V1311.39H870.11V1319.80ZM870.11 1319.80V1302.98H872.34V1319.80ZM872.34 1319.80V1302.98H874.57V1319.80ZM874.57 1319.80V1302.98H876.81V1319.80ZM876.81 1319.80V1302.98H879.04V1319.80ZM879.04 1319.80V1302.98H881.27V1319.80ZM881.27 1319.80V1302.98H883.50V1319.80ZM883.50 1319.80V1302.98H885.73V1319.80ZM885.73 1319.80V1302.98H887.96V1319.80ZM887.96 1319.80V1298.77H890.19V1319.80ZM1037.45 1319.80V1273.54H1039.68V1319.80ZM1039.68 1319.80V1277.75H1041.91V1319.80ZM1041.91 1319.80V1286.16H1044.14V1319.80ZM1044.14 1319.80V1290.37H1046.37V1319.80ZM1046.37 1319.80V1298.77H1048.60V1319.80ZM1048.60 1319.80V1298.77H1050.84V1319.80ZM1050.84 1319.80V1298.77H1053.07V1319.80ZM1053.07 1319.80V1302.98H1055.30V1319.80ZM1055.30 1319.80V1302.98H1057.53V1319.80ZM1057.53 1319.80V1302.98H1059.76V1319.80ZM1059.76 1319.80V1302.98H1061.99V1319.80ZM1061.99 1319.80V1302.98H1064.22V1319.80ZM1064.22 1319.80V1302.98H1066.45V1319.80ZM1066.45 1319.80V1302.98H1068.68V1319.80ZM1068.68 1319.80V1302.98H1070.92V1319.80ZM1070.92 1319.80V1311.39H1073.15V1319.80ZM1073.15 1319.80V1307.18H1075.38V1319.80ZM1075.38 1319.80V1302.98H1077.61V1319.80ZM1077.61 1319.80V1315.60H1079.84V1319.80ZM1079.84 1319.80V1315.60H1082.07V1319.80ZM1082.07 1319.80V1311.39H1084.30V1319.80ZM1084.30 1319.80V1302.98H1086.53V1319.80ZM1086.53 1319.80V1311.39H1088.77V1319.80ZM1088.77 1319.80V1311.39H1091.00V1319.80ZM1091.00 1319.80V1311.39H1093.23V1319.80ZM1093.23 1319.80V1311.39H1095.46V1319.80ZM1095.46 1319.80V1311.39H1097.69V1319.80ZM1097.69 1319.80V1311.39H1099.92V1319.80ZM1099.92 1319.80V1311.39H1102.15V1319.80ZM1102.15 1319.80V1307.18H1104.38V1319.80ZM1104.38 1319.80V1302.98H1106.61V1319.80ZM1106.61 1319.80V1311.39H1108.85V1319.80ZM1108.85 1319.80V1311.39H1111.08V1319.80ZM1111.08 1319.80V1311.39H1113.31V1319.80ZM1113.31 1319.80V1311.39H1115.54V1319.80ZM1115.54 1319.80V1307.18H1117.77V1319.80ZM1117.77 1319.80V1307.18H1120.00V1319.80ZM1120.00 1319.80V1311.39H1122.23V1319.80ZM1122.23 1319.80V1302.98H1124.46V1319.80ZM1124.46 1319.80V1302.98H1126.69V1319.80ZM1126.69 1319.80V1307.18H1128.93V1319.80ZM1128.93 1319.80V1315.60H1131.16V1319.80ZM1131.16 1319.80V1311.39H1133.39V1319.80ZM1133.39 1319.80V1307.18H1135.62V1319.80ZM1135.62 1319.80V1311.39H1137.85V1319.80ZM1137.85 1319.80V1315.60H1140.08V1319.80ZM1140.08 1319.80V1311.39H1142.31V1319.80ZM1142.31 1319.80V1311.39H1144.54V1319.80ZM1144.54 1319.80V1311.39H1146.78V1319.80ZM1146.78 1319.80V1302.98H1149.01V1319.80ZM1149.01 1319.80V1311.39H1151.24V1319.80ZM1151.24 1319.80V1311.39H1153.47V1319.80ZM1153.47 1319.80V1315.60H1155.70V1319.80ZM1155.70 1319.80V1311.39H1157.93V1319.80ZM1157.93 1319.80V1311.39H1160.16V1319.80ZM1160.16 1319.80V1315.60H1162.39V1319.80ZM1162.39 1319.80V1311.39H1164.62V1319.80ZM1164.62 1319.80V1311.39H1166.86V1319.80ZM1166.86 1319.80V1302.98H1169.09V1319.80ZM1169.09 1319.80V1311.39H1171.32V1319.80ZM1171.32 1319.80V1315.60H1173.55V1319.80ZM1173.55 1319.80V1307.18H1175.78V1319.80ZM1175.78 1319.80V1311.39H1178.01V1319.80ZM1178.01 1319.80V1311.39H1180.24V1319.80ZM1180.24 1319.80V1311.39H1182.47V1319.80ZM1182.47 1319.80V1315.60H1184.70V1319.80ZM1184.70 1319.80V1311.39H1186.94V1319.80ZM1186.94 1319.80V1311.39H1189.17V1319.80ZM1189.17 1319.80V1311.39H1191.40V1319.80ZM1191.40 1319.80V1307.18H1193.63V1319.80ZM1193.63 1319.80V1315.60H1195.86V1319.80ZM1195.86 1319.80V1307.18H1198.09V1319.80ZM1198.09 1319.80V1307.18H1200.32V1319.80ZM1200.32 1319.80V1307.18H1202.55V1319.80ZM1202.55 1319.80V1307.18H1204.79V1319.80ZM1204.79 1319.80V1307.18H1207.02V1319.80ZM1207.02 1319.80V1307.18H1209.25V1319.80ZM1209.25 1319.80V1307.18H1211.48V1319.80ZM1211.48 1319.80V1307.18H1213.71V1319.80ZM1358.73 1319.80V1185.24H1360.97V1319.80ZM1360.97 1319.80V1185.24H1363.20V1319.80ZM1363.20 1319.80V1181.03H1365.43V1319.80ZM1365.43 1319.80V1181.03H1367.66V1319.80ZM1367.66 1319.80V1185.24H1369.89V1319.80ZM1369.89 1319.80V1185.24H1372.12V1319.80ZM1372.12 1319.80V1185.24H1374.35V1319.80ZM1374.35 1319.80V1231.49H1376.58V1319.80ZM1376.58 1319.80V1273.54H1378.81V1319.80ZM1378.81 1319.80V1286.16H1381.05V1319.80ZM1381.05 1319.80V1294.57H1383.28V1319.80ZM1383.28 1319.80V1302.98H1385.51V1319.80ZM1385.51 1319.80V1307.18H1387.74V1319.80ZM1387.74 1319.80V1307.18H1389.97V1319.80ZM1389.97 1319.80V1307.18H1392.20V1319.80ZM1392.20 1319.80V1311.39H1394.43V1319.80ZM1394.43 1319.80V1311.39H1396.66V1319.80ZM1396.66 1319.80V1311.39H1398.90V1319.80ZM1398.90 1319.80V1315.60H1401.13V1319.80ZM1401.13 1319.80V1311.39H1403.36V1319.80ZM1403.36 1319.80V1311.39H1405.59V1319.80ZM1405.59 1319.80V1315.60H1407.82V1319.80ZM1407.82 1319.80V1311.39H1410.05V1319.80ZM1410.05 1319.80V1302.98H1412.28V1319.80ZM1412.28 1319.80V1302.98H1414.51V1319.80ZM1414.51 1319.80V1311.39H1416.74V1319.80ZM1416.74 1319.80V1302.98H1418.98V1319.80ZM1418.98 1319.80V1302.98H1421.21V1319.80ZM1421.21 1319.80V1315.60H1423.44V1319.80ZM1423.44 1319.80V1315.60H1425.67V1319.80ZM1425.67 1319.80V1307.18H1427.90V1319.80ZM1427.90 1319.80V1311.39H1430.13V1319.80ZM1430.13 1319.80V1311.39H1432.36V1319.80ZM1432.36 1319.80V1311.39H1434.59V1319.80ZM1434.59 1319.80V1311.39H1436.82V1319.80ZM1436.82 1319.80V1311.39H1439.06V1319.80ZM1439.06 1319.80V1315.60H1441.29V1319.80ZM1441.29 1319.80V1311.39H1443.52V1319.80ZM1443.52 1319.80V1311.39H1445.75V1319.80ZM1445.75 1319.80V1307.18H1447.98V1319.80ZM1447.98 1319.80V1311.39H1450.21V1319.80ZM1450.21 1319.80V1311.39H1452.44V1319.80ZM1452.44 1319.80V1302.98H1454.67V1319.80ZM1454.67 1319.80V1311.39H1456.91V1319.80ZM1456.91 1319.80V1311.39H1459.14V1319.80ZM1459.14 1319.80V1307.18H1461.37V1319.80ZM1461.37 1319.80V1311.39H1463.60V1319.80ZM1463.60 1319.80V1311.39H1465.83V1319.80ZM1465.83 1319.80V1311.39H1468.06V1319.80ZM1468.06 1319.80V1311.39H1470.29V1319.80ZM1470.29 1319.80V1311.39H1472.52V1319.80ZM1472.52 1319.80V1311.39H1474.75V1319.80ZM1474.75 1319.80V1311.39H1476.99V1319.80ZM1476.99 1319.80V1302.98H1479.22V1319.80ZM1479.22 1319.80V1311.39H1481.45V1319.80ZM1481.45 1319.80V1315.60H1483.68V1319.80ZM1483.68 1319.80V1307.18H1485.91V1319.80ZM1485.91 1319.80V1311.39H1488.14V1319.80ZM1488.14 1319.80V1315.60H1490.37V1319.80ZM1490.37 1319.80V1311.39H1492.60V1319.80ZM1492.60 1319.80V1307.18H1494.83V1319.80ZM1494.83 1319.80V1315.60H1497.07V1319.80ZM1497.07 1319.80V1302.98H1499.30V1319.80ZM1499.30 1319.80V1307.18H1501.53V1319.80ZM1501.53 1319.80V1307.18H1503.76V1319.80ZM1503.76 1319.80V1311.39H1505.99V1319.80ZM1505.99 1319.80V1315.60H1508.22V1319.80ZM1508.22 1319.80V1311.39H1510.45V1319.80ZM1510.45 1319.80V1311.39H1512.68V1319.80ZM1512.68 1319.80V1311.39H1514.92V1319.80ZM1514.92 1319.80V1307.18H1517.15V1319.80ZM1517.15 1319.80V1307.18H1519.38V1319.80ZM1519.38 1319.80V1307.18H1521.61V1319.80ZM1521.61 1319.80V1307.18H1523.84V1319.80ZM1523.84 1319.80V1307.18H1526.07V1319.80ZM1526.07 1319.80V1307.18H1528.30V1319.80ZM1528.30 1319.80V1307.18H1530.53V1319.80ZM1530.53 1319.80V1307.18H1532.76V1319.80ZM1680.02 1319.80V1176.83H1682.25V1319.80ZM1682.25 1319.80V1181.03H1684.48V1319.80ZM1684.48 1319.80V1239.90H1686.71V1319.80ZM1686.71 1319.80V1269.34H1688.94V1319.80ZM1688.94 1319.80V1277.75H1691.18V1319.80ZM1691.18 1319.80V1290.37H1693.41V1319.80ZM1693.41 1319.80V1302.98H1695.64V1319.80ZM1695.64 1319.80V1298.77H1697.87V1319.80ZM1697.87 1319.80V1298.77H1700.10V1319.80ZM1700.10 1319.80V1298.77H1702.33V1319.80ZM1702.33 1319.80V1298.77H1704.56V1319.80ZM1704.56 1319.80V1302.98H1706.79V1319.80ZM1706.79 1319.80V1307.18H1709.03V1319.80ZM1709.03 1319.80V1311.39H1711.26V1319.80ZM1711.26 1319.80V1307.18H1713.49V1319.80ZM1713.49 1319.80V1311.39H1715.72V1319.80ZM1715.72 1319.80V1311.39H1717.95V1319.80ZM1717.95 1319.80V1302.98H1720.18V1319.80ZM1720.18 1319.80V1315.60H1722.41V1319.80ZM1722.41 1319.80V1307.18H1724.64V1319.80ZM1724.64 1319.80V1307.18H1726.87V1319.80ZM1726.87 1319.80V1307.18H1729.11V1319.80ZM1729.11 1319.80V1307.18H1731.34V1319.80ZM1731.34 1319.80V1315.60H1733.57V1319.80ZM1733.57 1319.80V1307.18H1735.80V1319.80ZM1735.80 1319.80V1315.60H1738.03V1319.80ZM1738.03 1319.80V1311.39H1740.26V1319.80ZM1740.26 1319.80V1311.39H1742.49V1319.80ZM1742.49 1319.80V1315.60H1744.72V1319.80ZM1744.72 1319.80V1307.18H1746.95V1319.80ZM1746.95 1319.80V1302.98H1749.19V1319.80ZM1749.19 1319.80V1311.39H1751.42V1319.80ZM1751.42 1319.80V1311.39H1753.65V1319.80ZM1753.65 1319.80V1311.39H1755.88V1319.80ZM1755.88 1319.80V1307.18H1758.11V1319.80ZM1758.11 1319.80V1315.60H1760.34V1319.80ZM1760.34 1319.80V1311.39H1762.57V1319.80ZM1762.57 1319.80V1302.98H1764.80V1319.80ZM1764.80 1319.80V1311.39H1767.04V1319.80ZM1767.04 1319.80V1311.39H1769.27V1319.80ZM1769.27 1319.80V1307.18H1771.50V1319.80ZM1771.50 1319.80V1315.60H1773.73V1319.80ZM1773.73 1319.80V1311.39H1775.96V1319.80ZM1775.96 1319.80V1302.98H1778.19V1319.80ZM1778.19 1319.80V1311.39H1780.42V1319.80ZM1780.42 1319.80V1311.39H1782.65V1319.80ZM1782.65 1319.80V1307.18H1784.88V1319.80ZM1784.88 1319.80V1311.39H1787.12V1319.80ZM1787.12 1319.80V1311.39H1789.35V1319.80ZM1789.35 1319.80V1311.39H1791.58V1319.80ZM1791.58 1319.80V1315.60H1793.81V1319.80ZM1793.81 1319.80V1311.39H1796.04V1319.80ZM1796.04 1319.80V1311.39H1798.27V1319.80ZM1798.27 1319.80V1315.60H1800.50V1319.80ZM1800.50 1319.80V1311.39H1802.73V1319.80ZM1802.73 1319.80V1307.18H1804.96V1319.80ZM1804.96 1319.80V1311.39H1807.20V1319.80ZM1807.20 1319.80V1315.60H1809.43V1319.80ZM1809.43 1319.80V1311.39H1811.66V1319.80ZM1811.66 1319.80V1311.39H1813.89V1319.80ZM1813.89 1319.80V1311.39H1816.12V1319.80ZM1816.12 1319.80V1311.39H1818.35V1319.80ZM1818.35 1319.80V1311.39H1820.58V1319.80ZM1820.58 1319.80V1307.18H1822.81V1319.80ZM1822.81 1319.80V1311.39H1825.05V1319.80ZM1825.05 1319.80V1311.39H1827.28V1319.80ZM1827.28 1319.80V1315.60H1829.51V1319.80ZM1829.51 1319.80V1311.39H1831.74V1319.80ZM1831.74 1319.80V1307.18H1833.97V1319.80ZM1833.97 1319.80V1315.60H1836.20V1319.80ZM1836.20 1319.80V1311.39H1838.43V1319.80ZM1838.43 1319.80V1311.39H1840.66V1319.80ZM1840.66 1319.80V1307.18H1842.89V1319.80ZM1842.89 1319.80V1311.39H1845.13V1319.80ZM1845.13 1319.80V1311.39H1847.36V1319.80ZM1847.36 1319.80V1311.39H1849.59V1319.80ZM1849.59 1319.80V1307.18H1851.82V1319.80ZM1851.82 1319.80V1315.60H1854.05V1319.80ZM1854.05 1319.80V1311.39H1856.28V1319.80ZM1856.28 1319.80V1311.39H1858.51V1319.80ZM1858.51 1319.80V1307.18H1860.74V1319.80ZM1860.74 1319.80V1311.39H1862.97V1319.80ZM1862.97 1319.80V1302.98H1865.21V1319.80ZM1865.21 1319.80V1315.60H1867.44V1319.80ZM1867.44 1319.80V1311.39H1869.67V1319.80ZM1869.67 1319.80V1302.98H1871.90V1319.80ZM1871.90 1319.80V1315.60H1874.13V1319.80ZM1874.13 1319.80V1315.60H1876.36V1319.80ZM1876.36 1319.80V1311.39H1878.59V1319.80ZM1878.59 1319.80V1311.39H1880.82V1319.80ZM1880.82 1319.80V1307.18H1883.05V1319.80ZM1883.05 1319.80V1311.39H1885.29V1319.80ZM1885.29 1319.80V1311.39H1887.52V1319.80ZM1887.52 1319.80V1307.18H1889.75V1319.80ZM1889.75 1319.80V1311.39H1891.98V1319.80ZM1891.98 1319.80V1315.60H1894.21V1319.80ZM1894.21 1319.80V1315.60H1896.44V1319.80ZM1896.44 1319.80V1311.39H1898.67V1319.80ZM1898.67 1319.80V1311.39H1900.90V1319.80ZM1900.90 1319.80V1311.39H1903.14V1319.80ZM1903.14 1319.80V1311.39H1905.37V1319.80ZM1905.37 1319.80V1311.39H1907.60V1319.80ZM1907.60 1319.80V1311.39H1909.83V1319.80ZM1909.83 1319.80V1307.18H1912.06V1319.80ZM1912.06 1319.80V1307.18H1914.29V1319.80ZM1914.29 1319.80V1302.98H1916.52V1319.80ZM1916.52 1319.80V1311.39H1918.75V1319.80ZM1918.75 1319.80V1315.60H1920.98V1319.80ZM1920.98 1319.80V1315.60H1923.22V1319.80ZM1923.22 1319.80V1315.60H1925.45V1319.80ZM1925.45 1319.80V1311.39H1927.68V1319.80ZM1927.68 1319.80V1307.18H1929.91V1319.80ZM1929.91 1319.80V1311.39H1932.14V1319.80ZM1932.14 1319.80V1307.18H1934.37V1319.80ZM1934.37 1319.80V1311.39H1936.60V1319.80ZM1936.60 1319.80V1307.18H1938.83V1319.80ZM1938.83 1319.80V1311.39H1941.06V1319.80ZM1941.06 1319.80V1307.18H1943.30V1319.80ZM1943.30 1319.80V1315.60H1945.53V1319.80ZM1945.53 1319.80V1307.18H1947.76V1319.80ZM1947.76 1319.80V1311.39H1949.99V1319.80ZM1949.99 1319.80V1311.39H1952.22V1319.80ZM1952.22 1319.80V1311.39H1954.45V1319.80ZM1954.45 1319.80V1311.39H1956.68V1319.80ZM1956.68 1319.80V1307.18H1958.91V1319.80ZM1958.91 1319.80V1311.39H1961.15V1319.80ZM1961.15 1319.80V1311.39H1963.38V1319.80ZM1963.38 1319.80V1311.39H1965.61V1319.80ZM1965.61 1319.80V1311.39H1967.84V1319.80ZM1967.84 1319.80V1311.39H1970.07V1319.80ZM1970.07 1319.80V1311.39H1972.30V1319.80ZM1972.30 1319.80V1311.39H1974.53V1319.80ZM1974.53 1319.80V1307.18H1976.76V1319.80ZM1976.76 1319.80V1315.60H1978.99V1319.80ZM1978.99 1319.80V1311.39H1981.23V1319.80ZM1981.23 1319.80V1315.60H1983.46V1319.80ZM1983.46 1319.80V1311.39H1985.69V1319.80ZM1985.69 1319.80V1311.39H1987.92V1319.80ZM1987.92 1319.80V1302.98H1990.15V1319.80ZM1990.15 1319.80V1294.57H1992.38V1319.80ZM1992.38 1319.80V1307.18H1994.61V1319.80ZM1994.61 1319.80V1298.77H1996.84V1319.80ZM1996.84 1319.80V1302.98H1999.07V1319.80ZM1999.07 1319.80V1294.57H2001.31V1319.80ZM2001.31 1319.80V1302.98H2003.54V1319.80ZM2003.54 1319.80V1298.77H2005.77V1319.80ZM2005.77 1319.80V1302.98H2008.00V1319.80ZM2008.00 1319.80V1298.77H2010.23V1319.80ZM2010.23 1319.80V1294.57H2012.46V1319.80ZM2012.46 1319.80V1307.18H2014.69V1319.80ZM2014.69 1319.80V1298.77H2016.92V1319.80ZM2016.92 1319.80V1307.18H2019.16V1319.80ZM2019.16 1319.80V1298.77H2021.39V1319.80ZM2021.39 1319.80V1302.98H2023.62V1319.80ZM2023.62 1319.80V1298.77H2025.85V1319.80ZM2025.85 1319.80V1298.77H2028.08V1319.80ZM2028.08 1319.80V1294.57H2030.31V1319.80ZM2030.31 1319.80V1298.77H2032.54V1319.80ZM2032.54 1319.80V1302.98H2034.77V1319.80ZM2034.77 1319.80V1311.39H2037.00V1319.80ZM2037.00 1319.80V1315.60H2039.24V1319.80ZM2039.24 1319.80V1302.98H2041.47V1319.80ZM2041.47 1319.80V1311.39H2043.70V1319.80ZM2043.70 1319.80V1311.39H2045.93V1319.80ZM2045.93 1319.80V1311.39H2048.16V1319.80ZM2048.16 1319.80V1311.39H2050.39V1319.80ZM2050.39 1319.80V1307.18H2052.62V1319.80ZM2052.62 1319.80V1311.39H2054.85V1319.80ZM2054.85 1319.80V1307.18H2057.08V1319.80ZM2057.08 1319.80V1311.39H2059.32V1319.80ZM2059.32 1319.80V1311.39H2061.55V1319.80ZM2061.55 1319.80V1311.39H2063.78V1319.80ZM2063.78 1319.80V1311.39H2066.01V1319.80ZM2066.01 1319.80V1311.39H2068.24V1319.80ZM2068.24 1319.80V1311.39H2070.47V1319.80ZM2070.47 1319.80V1311.39H2072.70V1319.80ZM2072.70 1319.80V1311.39H2074.93V1319.80ZM2074.93 1319.80V1311.39H2077.17V1319.80ZM2077.17 1319.80V1311.39H2079.40V1319.80ZM2079.40 1319.80V1315.60H2081.63V1319.80ZM2081.63 1319.80V1315.60H2083.86V1319.80ZM2083.86 1319.80V1311.39H2086.09V1319.80ZM2086.09 1319.80V1311.39H2088.32V1319.80ZM2088.32 1319.80V1311.39H2090.55V1319.80ZM2090.55 1319.80V1302.98H2092.78V1319.80ZM2092.78 1319.80V1302.98H2095.01V1319.80ZM2095.01 1319.80V1311.39H2097.25V1319.80ZM2097.25 1319.80V1311.39H2099.48V1319.80ZM2099.48 1319.80V1311.39H2101.71V1319.80ZM2101.71 1319.80V1307.18H2103.94V1319.80ZM2103.94 1319.80V1311.39H2106.17V1319.80ZM2106.17 1319.80V1311.39H2108.40V1319.80ZM2108.40 1319.80V1307.18H2110.63V1319.80ZM2110.63 1319.80V1307.18H2112.86V1319.80ZM2112.86 1319.80V1307.18H2115.09V1319.80ZM2115.09 1319.80V1311.39H2117.33V1319.80ZM2117.33 1319.80V1311.39H2119.56V1319.80ZM2119.56 1319.80V1311.39H2121.79V1319.80ZM2121.79 1319.80V1311.39H2124.02V1319.80ZM2124.02 1319.80V1311.39H2126.25V1319.80ZM2126.25 1319.80V1311.39H2128.48V1319.80ZM2128.48 1319.80V1311.39H2130.71V1319.80ZM2130.71 1319.80V1311.39H2132.94V1319.80ZM2132.94 1319.80V1311.39H2135.17V1319.80ZM2135.17 1319.80V1302.98H2137.41V1319.80ZM2137.41 1319.80V1311.39H2139.64V1319.80ZM2139.64 1319.80V1311.39H2141.87V1319.80ZM2141.87 1319.80V1307.18H2144.10V1319.80ZM2144.10 1319.80V1307.18H2146.33V1319.80ZM2146.33 1319.80V1307.18H2148.56V1319.80ZM2148.56 1319.80V1307.18H2150.79V1319.80ZM2150.79 1319.80V1311.39H2153.02V1319.80ZM2153.02 1319.80V1307.18H2155.26V1319.80ZM2155.26 1319.80V1311.39H2157.49V1319.80ZM2157.49 1319.80V1311.39H2159.72V1319.80ZM2159.72 1319.80V1302.98H2161.95V1319.80ZM2161.95 1319.80V1307.18H2164.18V1319.80ZM2164.18 1319.80V1307.18H2166.41V1319.80ZM2166.41 1319.80V1307.18H2168.64V1319.80ZM2168.64 1319.80V1302.98H2170.87V1319.80ZM2170.87 1319.80V1307.18H2173.10V1319.80ZM2173.10 1319.80V1311.39H2175.34V1319.80ZM2175.34 1319.80V1307.18H2177.57V1319.80ZM2177.57 1319.80V1302.98H2179.80V1319.80ZM2179.80 1319.80V1307.18H2182.03V1319.80ZM2182.03 1319.80V1311.39H2184.26V1319.80ZM2184.26 1319.80V1307.18H2186.49V1319.80ZM2186.49 1319.80V1307.18H2188.72V1319.80ZM2188.72 1319.80V1307.18H2190.95V1319.80ZM2190.95 1319.80V1302.98H2193.18V1319.80ZM2193.18 1319.80V1307.18H2195.42V1319.80ZM2195.42 1319.80V1311.39H2197.65V1319.80ZM2197.65 1319.80V1307.18H2199.88V1319.80ZM2199.88 1319.80V1302.98H2202.11V1319.80ZM2202.11 1319.80V1307.18H2204.34V1319.80ZM2204.34 1319.80V1311.39H2206.57V1319.80ZM2206.57 1319.80V1307.18H2208.80V1319.80ZM2208.80 1319.80V1311.39H2211.03V1319.80ZM2211.03 1319.80V1298.77H2213.27V1319.80ZM2213.27 1319.80V1311.39H2215.50V1319.80ZM2215.50 1319.80V1302.98H2217.73V1319.80ZM2217.73 1319.80V1298.77H2219.96V1319.80ZM2219.96 1319.80V1302.98H2222.19V1319.80ZM2222.19 1319.80V1302.98H2224.42V1319.80ZM2224.42 1319.80V1307.18H2226.65V1319.80ZM2226.65 1319.80V1307.18H2228.88V1319.80ZM2228.88 1319.80V1307.18H2231.11V1319.80ZM2231.11 1319.80V1311.39H2233.35V1319.80ZM2233.35 1319.80V1311.39H2235.58V1319.80ZM2235.58 1319.80V1307.18H2237.81V1319.80ZM2237.81 1319.80V1307.18H2240.04V1319.80ZM2240.04 1319.80V1307.18H2242.27V1319.80ZM2242.27 1319.80V1302.98H2244.50V1319.80ZM2244.50 1319.80V1311.39H2246.73V1319.80ZM2246.73 1319.80V1311.39H2248.96V1319.80ZM2248.96 1319.80V1311.39H2251.19V1319.80ZM2251.19 1319.80V1311.39H2253.43V1319.80ZM2253.43 1319.80V1311.39H2255.66V1319.80ZM2255.66 1319.80V1311.39H2257.89V1319.80ZM2257.89 1319.80V1302.98H2260.12V1319.80ZM2260.12 1319.80V1311.39H2262.35V1319.80ZM2262.35 1319.80V1311.39H2264.58V1319.80ZM2264.58 1319.80V1315.60H2266.81V1319.80ZM2266.81 1319.80V1307.18H2269.04V1319.80ZM2269.04 1319.80V1307.18H2271.28V1319.80ZM2271.28 1319.80V1311.39H2273.51V1319.80ZM2273.51 1319.80V1315.60H2275.74V1319.80ZM2275.74 1319.80V1307.18H2277.97V1319.80ZM2277.97 1319.80V1307.18H2280.20V1319.80ZM2280.20 1319.80V1311.39H2282.43V1319.80ZM2282.43 1319.80V1311.39H2284.66V1319.80ZM2284.66 1319.80V1311.39H2286.89V1319.80ZM2286.89 1319.80V1302.98H2289.12V1319.80ZM2289.12 1319.80V1311.39H2291.36V1319.80ZM2291.36 1319.80V1311.39H2293.59V1319.80ZM2293.59 1319.80V1315.60H2295.82V1319.80ZM2295.82 1319.80V1315.60H2298.05V1319.80ZM2298.05 1319.80V1311.39H2300.28V1319.80ZM2300.28 1319.80V1311.39H2302.51V1319.80ZM2302.51 1319.80V1307.18H2304.74V1319.80ZM2304.74 1319.80V1311.39H2306.97V1319.80ZM2306.97 1319.80V1315.60H2309.20V1319.80ZM2309.20 1319.80V1311.39H2311.44V1319.80ZM2311.44 1319.80V1307.18H2313.67V1319.80ZM2313.67 1319.80V1311.39H2315.90V1319.80ZM2315.90 1319.80V1311.39H2318.13V1319.80ZM2318.13 1319.80V1302.98H2320.36V1319.80ZM2320.36 1319.80V1307.18H2322.59V1319.80ZM2322.59 1319.80V1311.39H2324.82V1319.80ZM2324.82 1319.80V1311.39H2327.05V1319.80ZM2327.05 1319.80V1311.39H2329.29V1319.80ZM2329.29 1319.80V1311.39H2331.52V1319.80ZM2331.52 1319.80V1315.60H2333.75V1319.80ZM2333.75 1319.80V1311.39H2335.98V1319.80ZM2335.98 1319.80V1307.18H2338.21V1319.80ZM2338.21 1319.80V1307.18H2340.44V1319.80ZM2340.44 1319.80V1307.18H2342.67V1319.80ZM2342.67 1319.80V1311.39H2344.90V1319.80ZM2344.90 1319.80V1307.18H2347.13V1319.80ZM2347.13 1319.80V1315.60H2349.37V1319.80ZM2349.37 1319.80V1302.98H2351.60V1319.80ZM2351.60 1319.80V1311.39H2353.83V1319.80ZM2353.83 1319.80V1311.39H2356.06V1319.80ZM2356.06 1319.80V1311.39H2358.29V1319.80ZM2358.29 1319.80V1315.60H2360.52V1319.80ZM2360.52 1319.80V1307.18H2362.75V1319.80ZM2362.75 1319.80V1311.39H2364.98V1319.80ZM2364.98 1319.80V1307.18H2367.21V1319.80ZM2367.21 1319.80V1311.39H2369.45V1319.80ZM2369.45 1319.80V1302.98H2371.68V1319.80ZM2371.68 1319.80V1307.18H2373.91V1319.80ZM2373.91 1319.80V1307.18H2376.14V1319.80ZM2376.14 1319.80V1307.18H2378.37V1319.80ZM2378.37 1319.80V1307.18H2380.60V1319.80ZM2380.60 1319.80V1307.18H2382.83V1319.80ZM2382.83 1319.80V1311.39H2385.06V1319.80ZM2385.06 1319.80V1298.77H2387.30V1319.80ZM2387.30 1319.80V1307.18H2389.53V1319.80ZM2389.53 1319.80V1307.18H2391.76V1319.80ZM2391.76 1319.80V1307.18H2393.99V1319.80ZM2393.99 1319.80V1298.77H2396.22V1319.80ZM2396.22 1319.80V1302.98H2398.45V1319.80ZM2398.45 1319.80V1307.18H2400.68V1319.80ZM2400.68 1319.80V1302.98H2402.91V1319.80ZM2402.91 1319.80V1302.98H2405.14V1319.80ZM2405.14 1319.80V1307.18H2407.38V1319.80ZM2407.38 1319.80V1307.18H2409.61V1319.80ZM2409.61 1319.80V1307.18H2411.84V1319.80ZM2411.84 1319.80V1307.18H2414.07V1319.80ZM2414.07 1319.80V1307.18H2416.30V1319.80Z" fill="#a0ebc0"/><path d="M249.85 1319.80V1290.37H252.08V1319.80ZM252.08 1319.80V1286.16H254.31V1319.80ZM254.31 1319.80V1290.37H256.55V1319.80ZM256.55 1319.80V1286.16H258.78V1319.80ZM258.78 1319.80V1286.16H261.01V1319.80ZM261.01 1319.80V1290.37H263.24V1319.80ZM263.24 1319.80V1286.16H265.47V1319.80ZM265.47 1319.80V1286.16H267.70V1319.80ZM267.70 1319.80V1281.95H269.93V1319.80ZM269.93 1319.80V1281.95H272.16V1319.80ZM272.16 1319.80V1286.16H274.40V1319.80ZM274.40 1319.80V1290.37H276.63V1319.80ZM276.63 1319.80V1286.16H278.86V1319.80ZM278.86 1319.80V1286.16H281.09V1319.80ZM281.09 1319.80V1286.16H283.32V1319.80ZM283.32 1319.80V1290.37H285.55V1319.80ZM285.55 1319.80V1290.37H287.78V1319.80ZM287.78 1319.80V1290.37H290.01V1319.80ZM290.01 1319.80V1286.16H292.24V1319.80ZM292.24 1319.80V1286.16H294.48V1319.80ZM294.48 1319.80V1290.37H296.71V1319.80ZM296.71 1319.80V1294.57H298.94V1319.80ZM298.94 1319.80V1294.57H301.17V1319.80ZM301.17 1319.80V1294.57H303.40V1319.80ZM303.40 1319.80V1281.95H305.63V1319.80ZM305.63 1319.80V1298.77H307.86V1319.80ZM307.86 1319.80V1290.37H310.09V1319.80ZM310.09 1319.80V1290.37H312.32V1319.80ZM312.32 1319.80V1302.98H314.56V1319.80ZM314.56 1319.80V1294.57H316.79V1319.80ZM316.79 1319.80V1298.77H319.02V1319.80ZM319.02 1319.80V1298.77H321.25V1319.80ZM321.25 1319.80V1302.98H323.48V1319.80ZM323.48 1319.80V1298.77H325.71V1319.80ZM325.71 1319.80V1298.77H327.94V1319.80ZM327.94 1319.80V1298.77H330.17V1319.80ZM330.17 1319.80V1298.77H332.41V1319.80ZM332.41 1319.80V1298.77H334.64V1319.80ZM334.64 1319.80V1294.57H336.87V1319.80ZM336.87 1319.80V1294.57H339.10V1319.80ZM339.10 1319.80V1294.57H341.33V1319.80ZM341.33 1319.80V1302.98H343.56V1319.80ZM343.56 1319.80V1302.98H345.79V1319.80ZM345.79 1319.80V1307.18H348.02V1319.80ZM348.02 1319.80V1302.98H350.25V1319.80ZM350.25 1319.80V1298.77H352.49V1319.80ZM352.49 1319.80V1307.18H354.72V1319.80ZM354.72 1319.80V1298.77H356.95V1319.80ZM356.95 1319.80V1302.98H359.18V1319.80ZM359.18 1319.80V1302.98H361.41V1319.80ZM361.41 1319.80V1302.98H363.64V1319.80ZM363.64 1319.80V1302.98H365.87V1319.80ZM365.87 1319.80V1298.77H368.10V1319.80ZM368.10 1319.80V1302.98H370.33V1319.80ZM370.33 1319.80V1298.77H372.57V1319.80ZM372.57 1319.80V1302.98H374.80V1319.80ZM374.80 1319.80V1307.18H377.03V1319.80ZM377.03 1319.80V1307.18H379.26V1319.80ZM379.26 1319.80V1302.98H381.49V1319.80ZM381.49 1319.80V1294.57H383.72V1319.80ZM383.72 1319.80V1302.98H385.95V1319.80ZM385.95 1319.80V1302.98H388.18V1319.80ZM388.18 1319.80V1302.98H390.42V1319.80ZM390.42 1319.80V1307.18H392.65V1319.80ZM392.65 1319.80V1307.18H394.88V1319.80ZM571.14 1319.80V1294.57H573.37V1319.80ZM573.37 1319.80V1294.57H575.60V1319.80ZM575.60 1319.80V1286.16H577.83V1319.80ZM577.83 1319.80V1290.37H580.06V1319.80ZM580.06 1319.80V1290.37H582.29V1319.80ZM582.29 1319.80V1290.37H584.53V1319.80ZM584.53 1319.80V1281.95H586.76V1319.80ZM586.76 1319.80V1206.26H588.99V1319.80ZM588.99 1319.80V1088.52H591.22V1319.80ZM591.22 1319.80V1071.70H593.45V1319.80ZM593.45 1319.80V1071.70H595.68V1319.80ZM595.68 1319.80V1084.32H597.91V1319.80ZM597.91 1319.80V1059.09H600.14V1319.80ZM600.14 1319.80V1063.30H602.37V1319.80ZM602.37 1319.80V1109.55H604.61V1319.80ZM604.61 1319.80V1256.72H606.84V1319.80ZM606.84 1319.80V1260.93H609.07V1319.80ZM609.07 1319.80V1273.54H611.30V1319.80ZM611.30 1319.80V1256.72H613.53V1319.80ZM613.53 1319.80V1239.90H615.76V1319.80ZM615.76 1319.80V1214.67H617.99V1319.80ZM617.99 1319.80V1029.65H620.22V1319.80ZM620.22 1319.80V1038.07H622.45V1319.80ZM622.45 1319.80V1008.63H624.69V1319.80ZM624.69 1319.80V1105.35H626.92V1319.80ZM626.92 1319.80V1231.49H629.15V1319.80ZM629.15 1319.80V1122.16H631.38V1319.80ZM631.38 1319.80V1117.96H633.61V1319.80ZM633.61 1319.80V1189.44H635.84V1319.80ZM635.84 1319.80V1181.03H638.07V1319.80ZM638.07 1319.80V1202.06H640.30V1319.80ZM640.30 1319.80V1235.70H642.54V1319.80ZM642.54 1319.80V1218.88H644.77V1319.80ZM644.77 1319.80V1223.09H647.00V1319.80ZM647.00 1319.80V1227.29H649.23V1319.80ZM649.23 1319.80V1239.90H651.46V1319.80ZM651.46 1319.80V1244.11H653.69V1319.80ZM653.69 1319.80V1252.52H655.92V1319.80ZM655.92 1319.80V1248.32H658.15V1319.80ZM658.15 1319.80V1248.32H660.38V1319.80ZM660.38 1319.80V1248.32H662.62V1319.80ZM662.62 1319.80V1252.52H664.85V1319.80ZM664.85 1319.80V1231.49H667.08V1319.80ZM667.08 1319.80V1181.03H669.31V1319.80ZM669.31 1319.80V1151.60H671.54V1319.80ZM671.54 1319.80V1164.21H673.77V1319.80ZM673.77 1319.80V1181.03H676.00V1319.80ZM676.00 1319.80V1185.24H678.23V1319.80ZM678.23 1319.80V1164.21H680.46V1319.80ZM680.46 1319.80V1033.86H682.70V1319.80ZM682.70 1319.80V1130.58H684.93V1319.80ZM684.93 1319.80V1227.29H687.16V1319.80ZM687.16 1319.80V1239.90H689.39V1319.80ZM689.39 1319.80V1189.44H691.62V1319.80ZM691.62 1319.80V1176.83H693.85V1319.80ZM693.85 1319.80V1218.88H696.08V1319.80ZM696.08 1319.80V1218.88H698.31V1319.80ZM698.31 1319.80V1151.60H700.55V1319.80ZM700.55 1319.80V1138.98H702.78V1319.80ZM702.78 1319.80V1155.80H705.01V1319.80ZM705.01 1319.80V1155.80H707.24V1319.80ZM707.24 1319.80V1160.01H709.47V1319.80ZM709.47 1319.80V1176.83H711.70V1319.80ZM711.70 1319.80V1172.62H713.93V1319.80ZM713.93 1319.80V1181.03H716.16V1319.80ZM890.19 1319.80V1298.77H892.42V1319.80ZM892.42 1319.80V1290.37H894.66V1319.80ZM894.66 1319.80V1290.37H896.89V1319.80ZM896.89 1319.80V1290.37H899.12V1319.80ZM899.12 1319.80V1244.11H901.35V1319.80ZM901.35 1319.80V1235.70H903.58V1319.80ZM903.58 1319.80V1214.67H905.81V1319.80ZM905.81 1319.80V1214.67H908.04V1319.80ZM908.04 1319.80V1227.29H910.27V1319.80ZM910.27 1319.80V1214.67H912.50V1319.80ZM912.50 1319.80V1193.65H914.74V1319.80ZM914.74 1319.80V1105.35H916.97V1319.80ZM916.97 1319.80V1050.68H919.20V1319.80ZM919.20 1319.80V970.78H921.43V1319.80ZM921.43 1319.80V861.45H923.66V1319.80ZM923.66 1319.80V1096.93H925.89V1319.80ZM925.89 1319.80V1063.30H928.12V1319.80ZM928.12 1319.80V1075.91H930.35V1319.80ZM930.35 1319.80V1160.01H932.58V1319.80ZM932.58 1319.80V1231.49H934.82V1319.80ZM934.82 1319.80V1235.70H937.05V1319.80ZM937.05 1319.80V1143.19H939.28V1319.80ZM939.28 1319.80V1050.68H941.51V1319.80ZM941.51 1319.80V1038.07H943.74V1319.80ZM943.74 1319.80V1042.27H945.97V1319.80ZM945.97 1319.80V1155.80H948.20V1319.80ZM948.20 1319.80V1197.86H950.43V1319.80ZM950.43 1319.80V1059.09H952.67V1319.80ZM952.67 1319.80V1017.04H954.90V1319.80ZM954.90 1319.80V1017.04H957.13V1319.80ZM957.13 1319.80V1025.45H959.36V1319.80ZM959.36 1319.80V1109.55H961.59V1319.80ZM961.59 1319.80V1239.90H963.82V1319.80ZM963.82 1319.80V1244.11H966.05V1319.80ZM966.05 1319.80V1033.86H968.28V1319.80ZM968.28 1319.80V945.55H970.51V1319.80ZM970.51 1319.80V1096.93H972.75V1319.80ZM972.75 1319.80V1210.47H974.98V1319.80ZM974.98 1319.80V1235.70H977.21V1319.80ZM977.21 1319.80V1239.90H979.44V1319.80ZM979.44 1319.80V1193.65H981.67V1319.80ZM981.67 1319.80V1130.58H983.90V1319.80ZM983.90 1319.80V1092.73H986.13V1319.80ZM986.13 1319.80V1088.52H988.36V1319.80ZM988.36 1319.80V1113.75H990.59V1319.80ZM990.59 1319.80V1101.14H992.83V1319.80ZM992.83 1319.80V1021.24H995.06V1319.80ZM995.06 1319.80V1029.65H997.29V1319.80ZM997.29 1319.80V1185.24H999.52V1319.80ZM999.52 1319.80V1210.47H1001.75V1319.80ZM1001.75 1319.80V1239.90H1003.98V1319.80ZM1003.98 1319.80V1269.34H1006.21V1319.80ZM1006.21 1319.80V1210.47H1008.44V1319.80ZM1008.44 1319.80V1168.42H1010.67V1319.80ZM1010.67 1319.80V1206.26H1012.91V1319.80ZM1012.91 1319.80V1193.65H1015.14V1319.80ZM1015.14 1319.80V1164.21H1017.37V1319.80ZM1017.37 1319.80V1181.03H1019.60V1319.80ZM1019.60 1319.80V1168.42H1021.83V1319.80ZM1021.83 1319.80V1168.42H1024.06V1319.80ZM1024.06 1319.80V1210.47H1026.29V1319.80ZM1026.29 1319.80V1189.44H1028.52V1319.80ZM1028.52 1319.80V1273.54H1030.76V1319.80ZM1030.76 1319.80V1273.54H1032.99V1319.80ZM1032.99 1319.80V1281.95H1035.22V1319.80ZM1035.22 1319.80V1273.54H1037.45V1319.80ZM1213.71 1319.80V1294.57H1215.94V1319.80ZM1215.94 1319.80V1277.75H1218.17V1319.80ZM1218.17 1319.80V1239.90H1220.40V1319.80ZM1220.40 1319.80V1235.70H1222.63V1319.80ZM1222.63 1319.80V1239.90H1224.87V1319.80ZM1224.87 1319.80V1214.67H1227.10V1319.80ZM1227.10 1319.80V1122.16H1229.33V1319.80ZM1229.33 1319.80V941.35H1231.56V1319.80ZM1231.56 1319.80V966.58H1233.79V1319.80ZM1233.79 1319.80V1021.24H1236.02V1319.80ZM1236.02 1319.80V1050.68H1238.25V1319.80ZM1238.25 1319.80V1059.09H1240.48V1319.80ZM1240.48 1319.80V1109.55H1242.71V1319.80ZM1242.71 1319.80V1113.75H1244.95V1319.80ZM1244.95 1319.80V1138.98H1247.18V1319.80ZM1247.18 1319.80V1214.67H1249.41V1319.80ZM1249.41 1319.80V1189.44H1251.64V1319.80ZM1251.64 1319.80V1189.44H1253.87V1319.80ZM1253.87 1319.80V1193.65H1256.10V1319.80ZM1256.10 1319.80V1189.44H1258.33V1319.80ZM1258.33 1319.80V1210.47H1260.56V1319.80ZM1260.56 1319.80V1185.24H1262.80V1319.80ZM1262.80 1319.80V1067.50H1265.03V1319.80ZM1265.03 1319.80V1084.32H1267.26V1319.80ZM1267.26 1319.80V1134.78H1269.49V1319.80ZM1269.49 1319.80V1176.83H1271.72V1319.80ZM1271.72 1319.80V1197.86H1273.95V1319.80ZM1273.95 1319.80V1071.70H1276.18V1319.80ZM1276.18 1319.80V1096.93H1278.41V1319.80ZM1278.41 1319.80V1033.86H1280.64V1319.80ZM1280.64 1319.80V1143.19H1282.88V1319.80ZM1282.88 1319.80V1218.88H1285.11V1319.80ZM1285.11 1319.80V1231.49H1287.34V1319.80ZM1287.34 1319.80V1252.52H1289.57V1319.80ZM1289.57 1319.80V1244.11H1291.80V1319.80ZM1291.80 1319.80V1256.72H1294.03V1319.80ZM1294.03 1319.80V1244.11H1296.26V1319.80ZM1296.26 1319.80V1244.11H1298.49V1319.80ZM1298.49 1319.80V1239.90H1300.72V1319.80ZM1300.72 1319.80V1252.52H1302.96V1319.80ZM1302.96 1319.80V1160.01H1305.19V1319.80ZM1305.19 1319.80V1075.91H1307.42V1319.80ZM1307.42 1319.80V1071.70H1309.65V1319.80ZM1309.65 1319.80V1185.24H1311.88V1319.80ZM1311.88 1319.80V1189.44H1314.11V1319.80ZM1314.11 1319.80V1193.65H1316.34V1319.80ZM1316.34 1319.80V1160.01H1318.57V1319.80ZM1318.57 1319.80V1092.73H1320.80V1319.80ZM1320.80 1319.80V1096.93H1323.04V1319.80ZM1323.04 1319.80V1181.03H1325.27V1319.80ZM1325.27 1319.80V1008.63H1327.50V1319.80ZM1327.50 1319.80V1063.30H1329.73V1319.80ZM1329.73 1319.80V1164.21H1331.96V1319.80ZM1331.96 1319.80V1218.88H1334.19V1319.80ZM1334.19 1319.80V1248.32H1336.42V1319.80ZM1336.42 1319.80V1206.26H1338.65V1319.80ZM1338.65 1319.80V1214.67H1340.89V1319.80ZM1340.89 1319.80V1231.49H1343.12V1319.80ZM1343.12 1319.80V1235.70H1345.35V1319.80ZM1345.35 1319.80V1197.86H1347.58V1319.80ZM1347.58 1319.80V1147.39H1349.81V1319.80ZM1349.81 1319.80V1155.80H1352.04V1319.80ZM1352.04 1319.80V1197.86H1354.27V1319.80ZM1354.27 1319.80V1181.03H1356.50V1319.80ZM1356.50 1319.80V1176.83H1358.73V1319.80ZM1532.76 1319.80V1302.98H1535.00V1319.80ZM1535.00 1319.80V1286.16H1537.23V1319.80ZM1537.23 1319.80V1260.93H1539.46V1319.80ZM1539.46 1319.80V1239.90H1541.69V1319.80ZM1541.69 1319.80V1239.90H1543.92V1319.80ZM1543.92 1319.80V1252.52H1546.15V1319.80ZM1546.15 1319.80V1231.49H1548.38V1319.80ZM1548.38 1319.80V1197.86H1550.61V1319.80ZM1550.61 1319.80V1113.75H1552.84V1319.80ZM1552.84 1319.80V1122.16H1555.08V1319.80ZM1555.08 1319.80V1071.70H1557.31V1319.80ZM1557.31 1319.80V991.81H1559.54V1319.80ZM1559.54 1319.80V903.50H1561.77V1319.80ZM1561.77 1319.80V966.58H1564.00V1319.80ZM1564.00 1319.80V1054.88H1566.23V1319.80ZM1566.23 1319.80V991.81H1568.46V1319.80ZM1568.46 1319.80V996.01H1570.69V1319.80ZM1570.69 1319.80V1168.42H1572.92V1319.80ZM1572.92 1319.80V1033.86H1575.16V1319.80ZM1575.16 1319.80V979.19H1577.39V1319.80ZM1577.39 1319.80V1096.93H1579.62V1319.80ZM1579.62 1319.80V1063.30H1581.85V1319.80ZM1581.85 1319.80V1096.93H1584.08V1319.80ZM1584.08 1319.80V1138.98H1586.31V1319.80ZM1586.31 1319.80V1239.90H1588.54V1319.80ZM1588.54 1319.80V1235.70H1590.77V1319.80ZM1590.77 1319.80V1071.70H1593.01V1319.80ZM1593.01 1319.80V1046.47H1595.24V1319.80ZM1595.24 1319.80V1067.50H1597.47V1319.80ZM1597.47 1319.80V1063.30H1599.70V1319.80ZM1599.70 1319.80V966.58H1601.93V1319.80ZM1601.93 1319.80V974.99H1604.16V1319.80ZM1604.16 1319.80V1096.93H1606.39V1319.80ZM1606.39 1319.80V1248.32H1608.62V1319.80ZM1608.62 1319.80V1218.88H1610.85V1319.80ZM1610.85 1319.80V1172.62H1613.09V1319.80ZM1613.09 1319.80V1138.98H1615.32V1319.80ZM1615.32 1319.80V1227.29H1617.55V1319.80ZM1617.55 1319.80V1143.19H1619.78V1319.80ZM1619.78 1319.80V1147.39H1622.01V1319.80ZM1622.01 1319.80V1168.42H1624.24V1319.80ZM1624.24 1319.80V1134.78H1626.47V1319.80ZM1626.47 1319.80V1050.68H1628.70V1319.80ZM1628.70 1319.80V1029.65H1630.93V1319.80ZM1630.93 1319.80V1029.65H1633.17V1319.80ZM1633.17 1319.80V1054.88H1635.40V1319.80ZM1635.40 1319.80V1080.12H1637.63V1319.80ZM1637.63 1319.80V1067.50H1639.86V1319.80ZM1639.86 1319.80V1113.75H1642.09V1319.80ZM1642.09 1319.80V1088.52H1644.32V1319.80ZM1644.32 1319.80V1155.80H1646.55V1319.80ZM1646.55 1319.80V1084.32H1648.78V1319.80ZM1648.78 1319.80V1042.27H1651.02V1319.80ZM1651.02 1319.80V1109.55H1653.25V1319.80ZM1653.25 1319.80V1160.01H1655.48V1319.80ZM1655.48 1319.80V1227.29H1657.71V1319.80ZM1657.71 1319.80V1210.47H1659.94V1319.80ZM1659.94 1319.80V1172.62H1662.17V1319.80ZM1662.17 1319.80V1164.21H1664.40V1319.80ZM1664.40 1319.80V1130.58H1666.63V1319.80ZM1666.63 1319.80V1067.50H1668.86V1319.80ZM1668.86 1319.80V1109.55H1671.10V1319.80ZM1671.10 1319.80V1176.83H1673.33V1319.80ZM1673.33 1319.80V1185.24H1675.56V1319.80ZM1675.56 1319.80V1176.83H1677.79V1319.80ZM1677.79 1319.80V1176.83H1680.02V1319.80Z" fill="#24916f" stroke="#ffffff" stroke-opacity="0.06" stroke-width="0.5"/></g>
<line x1="167.3" y1="814.70" x2="167.3" y2="1320.80" stroke="#6a6a6a" stroke-width="2"/>
<line x1="166.3" y1="1320.30" x2="2416.3" y2="1320.30" stroke="#5a5a5a" stroke-width="2"/>
<line x1="156" y1="1319.80" x2="167.3" y2="1319.80" stroke="#707070" stroke-width="1.2"/>
<text x="145.5" y="1325.70" text-anchor="end" font-family='"Liberation Sans", sans-serif' font-size="18.5" letter-spacing="1.6" fill="#333">0</text>
<line x1="156" y1="1235.70" x2="167.3" y2="1235.70" stroke="#707070" stroke-width="1.2"/>
<text x="145.5" y="1241.60" text-anchor="end" font-family='"Liberation Sans", sans-serif' font-size="18.5" letter-spacing="1.6" fill="#333">20</text>
<line x1="156" y1="1151.60" x2="167.3" y2="1151.60" stroke="#707070" stroke-width="1.2"/>
<text x="145.5" y="1157.50" text-anchor="end" font-family='"Liberation Sans", sans-serif' font-size="18.5" letter-spacing="1.6" fill="#333">40</text>
<line x1="156" y1="1067.50" x2="167.3" y2="1067.50" stroke="#707070" stroke-width="1.2"/>
<text x="145.5" y="1073.40" text-anchor="end" font-family='"Liberation Sans", sans-serif' font-size="18.5" letter-spacing="1.6" fill="#333">60</text>
<line x1="156" y1="983.40" x2="167.3" y2="983.40" stroke="#707070" stroke-width="1.2"/>
<text x="145.5" y="989.30" text-anchor="end" font-family='"Liberation Sans", sans-serif' font-size="18.5" letter-spacing="1.6" fill="#333">80</text>
<line x1="156" y1="899.30" x2="167.3" y2="899.30" stroke="#707070" stroke-width="1.2"/>
<text x="145.5" y="905.20" text-anchor="end" font-family='"Liberation Sans", sans-serif' font-size="18.5" letter-spacing="1.6" fill="#333">100</text>
<line x1="156" y1="815.20" x2="167.3" y2="815.20" stroke="#707070" stroke-width="1.2"/>
<text x="145.5" y="821.10" text-anchor="end" font-family='"Liberation Sans", sans-serif' font-size="18.5" letter-spacing="1.6" fill="#333">120</text>
<line x1="167.30" y1="1320.80" x2="167.30" y2="1331" stroke="#9a9a9a" stroke-width="1.2"/>
<text x="167.30" y="1357" text-anchor="middle" font-family='"Liberation Sans", sans-serif' font-size="19" letter-spacing="1.3" fill="#222" stroke="#222" stroke-width="0.3">lun. 06</text>
<line x1="488.59" y1="1320.80" x2="488.59" y2="1331" stroke="#9a9a9a" stroke-width="1.2"/>
<text x="488.59" y="1357" text-anchor="middle" font-family='"Liberation Sans", sans-serif' font-size="19" letter-spacing="1.3" fill="#222" stroke="#222" stroke-width="0.3">mar. 07</text>
<line x1="809.87" y1="1320.80" x2="809.87" y2="1331" stroke="#9a9a9a" stroke-width="1.2"/>
<text x="809.87" y="1357" text-anchor="middle" font-family='"Liberation Sans", sans-serif' font-size="19" letter-spacing="1.3" fill="#222" stroke="#222" stroke-width="0.3">mer. 08</text>
<line x1="1131.16" y1="1320.80" x2="1131.16" y2="1331" stroke="#9a9a9a" stroke-width="1.2"/>
<text x="1131.16" y="1357" text-anchor="middle" font-family='"Liberation Sans", sans-serif' font-size="19" letter-spacing="1.3" fill="#222" stroke="#222" stroke-width="0.3">jeu. 09</text>
<line x1="1452.44" y1="1320.80" x2="1452.44" y2="1331" stroke="#9a9a9a" stroke-width="1.2"/>
<text x="1452.44" y="1357" text-anchor="middle" font-family='"Liberation Sans", sans-serif' font-size="19" letter-spacing="1.3" fill="#222" stroke="#222" stroke-width="0.3">ven. 10</text>
<line x1="1773.73" y1="1320.80" x2="1773.73" y2="1331" stroke="#9a9a9a" stroke-width="1.2"/>
<text x="1773.73" y="1357" text-anchor="middle" font-family='"Liberation Sans", sans-serif' font-size="19" letter-spacing="1.3" fill="#222" stroke="#222" stroke-width="0.3">sam. 11</text>
<line x1="2095.01" y1="1320.80" x2="2095.01" y2="1331" stroke="#9a9a9a" stroke-width="1.2"/>
<text x="2095.01" y="1357" text-anchor="middle" font-family='"Liberation Sans", sans-serif' font-size="19" letter-spacing="1.3" fill="#222" stroke="#222" stroke-width="0.3">dim. 12</text>
<text x="0" y="0" transform="translate(85,1067) rotate(-90)" text-anchor="middle" font-family='"Liberation Sans", sans-serif' font-size="21" fill="#444">kW</text>
</svg>
<svg width="2511" height="1415" viewBox="0 0 2511 1415" style="position:absolute;left:0;top:0">
<defs><filter id="bshadow" x="-5%" y="-20%" width="110%" height="140%"><feGaussianBlur stdDeviation="2"/></filter><linearGradient id="wave" x1="0" y1="0" x2="0" y2="1"><stop offset="0" stop-color="#00d4b2"/><stop offset="1" stop-color="#00b294"/></linearGradient><linearGradient id="ecoL" x1="0" y1="0" x2="0" y2="1"><stop offset="0.52" stop-color="#00f2cc"/><stop offset="0.52" stop-color="#00b99b"/></linearGradient></defs>
<rect x="176.5" y="49.2" width="481.5" height="77.3" fill="#0b0a17"/>
<linearGradient id="ecoG" gradientUnits="userSpaceOnUse" x1="0" y1="79" x2="0" y2="111"><stop offset="0.56" stop-color="#00f0cc"/><stop offset="0.56" stop-color="#00b99b"/></linearGradient>
<g fill="none" stroke="url(#ecoG)" stroke-width="7.4" stroke-linecap="round" stroke-linejoin="round"><path d="M192.0 94.4 H210.6 A9.3 11.6 0 1 0 208.6 102.3"/><path d="M236.4 87.2 A9.3 11.8 0 1 0 236.4 102.4"/><ellipse cx="257.2" cy="94.8" rx="9.7" ry="11.8"/></g>
<path d="M198.2 74.6 L204.8 71.6" stroke="#00f0cc" stroke-width="6.2" stroke-linecap="round"/>
<g fill="none" stroke="#ffffff" stroke-width="7.4" stroke-linecap="round" stroke-linejoin="round"><path d="M276.4 86.4 L283.2 106.6 L291.5 81.6 L299.6 106.6 L313.9 67.6"/><path d="M317.2 85.2 Q326 75.5 335.4 85.4 V106.8"/><ellipse cx="324.9" cy="100.8" rx="8.5" ry="6.8" stroke-width="6"/><path d="M346.8 74.2 V101 Q346.8 107.2 353.2 107.2"/><path d="M362.0 74.2 V101 Q362.0 107.2 368.4 107.2"/><path d="M341.2 81.6 H371.8"/></g>
<ellipse cx="433.7" cy="89" rx="25.9" ry="28.2" fill="#00b3df"/>
<text x="433.7" y="97" text-anchor="middle" font-family='"Liberation Sans", sans-serif' font-size="22" letter-spacing="-1.5" fill="#ffffff">Rte</text>
<line x1="420" y1="88" x2="449" y2="88" stroke="#ffffff" stroke-width="1.2"/>
<text x="468.5" y="79.3" font-family='"Liberation Sans", sans-serif' font-size="12" letter-spacing="-0.4" fill="#00a6d6">Le réseau</text>
<text x="468.5" y="92.2" font-family='"Liberation Sans", sans-serif' font-size="12" letter-spacing="-0.4" fill="#00a6d6">de transport</text>
<text x="468.5" y="105.1" font-family='"Liberation Sans", sans-serif' font-size="12" letter-spacing="-0.4" fill="#00a6d6">d'électricité</text>
<rect x="546.2" y="61.4" width="100.8" height="55.9" fill="#ffffff"/>
<rect x="553" y="68.7" width="8.5" height="6.9" fill="#2a3d8f"/><rect x="563" y="68.7" width="8.5" height="6.9" fill="#e1000f"/>
<text x="552.5" y="85" font-family='"Liberation Sans", sans-serif' font-weight="bold" font-size="7.6" fill="#222">RÉPUBLIQUE</text>
<text x="552.5" y="93.2" font-family='"Liberation Sans", sans-serif' font-weight="bold" font-size="7.6" fill="#222">FRANÇAISE</text>
<rect x="553" y="98.0" width="9" height="1.3" fill="#888"/>
<rect x="553" y="102.5" width="9" height="1.3" fill="#888"/>
<rect x="553" y="107.0" width="11" height="1.3" fill="#888"/>
<rect x="607.2" y="66.4" width="34.8" height="45.4" fill="#ffffff" stroke="#4a78c4" stroke-width="1.1"/>
<text x="624.5" y="75" text-anchor="middle" font-family='"Liberation Sans", sans-serif' font-weight="bold" font-size="6.8" letter-spacing="0.6" fill="#e2231a">ADEME</text>
<circle cx="624.3" cy="87.2" r="8.8" fill="#2656a8"/><path d="M619 83 q3 -2 5 1 q-1 3 2 4 q2 3 -1 6" stroke="#8fb0e0" stroke-width="1.3" fill="none"/>
<rect x="612" y="99.4" width="25" height="1.5" fill="#e2231a" opacity="0.8"/>
<rect x="612" y="102.6" width="25" height="1.5" fill="#e2231a" opacity="0.8"/>
<rect x="612" y="105.8" width="25" height="1.5" fill="#e2231a" opacity="0.8"/>
<rect x="170.9" y="137" width="486" height="120" fill="none" stroke="#d9d9d9" stroke-width="3.4"/>
<rect x="655" y="135.3" width="5.2" height="125" fill="#d9d9d9"/><rect x="169.2" y="253.4" width="491" height="5.3" fill="#d9d9d9"/>
<rect x="289.0" y="137" width="5.6" height="120" fill="#d9d9d9"/>
<rect x="411.2" y="137" width="5.6" height="120" fill="#d9d9d9"/>
<rect x="533.2" y="137" width="5.6" height="120" fill="#d9d9d9"/>
<rect x="172" y="188.7" width="484" height="5.7" fill="#d9d9d9"/>
<g transform="translate(180.2,195.4) scale(1.0600,0.5560)"><rect x="0" y="0" width="100" height="100" fill="url(#wave)"/><path d="M14 0 C 35 20, 55 44, 70 44 C 82 44, 92 38, 100 30 L100 5 C 90 15, 80 21, 68 21 C 52 21, 40 8, 28 0 Z" fill="#00f0c8"/><path d="M28 0 L100 0 L100 5 C 90 15, 80 21, 68 21 C 52 21, 40 8, 28 0 Z" fill="#00a68c"/></g>
<text x="231.1" y="175" text-anchor="middle" font-family='"Liberation Sans", sans-serif' font-size="33" fill="#000" stroke="#000" stroke-width="0.5">J</text>
<g transform="translate(301.8,195.4) scale(1.0600,0.5560)"><rect x="0" y="0" width="100" height="100" fill="url(#wave)"/><path d="M14 0 C 35 20, 55 44, 70 44 C 82 44, 92 38, 100 30 L100 5 C 90 15, 80 21, 68 21 C 52 21, 40 8, 28 0 Z" fill="#00f0c8"/><path d="M28 0 L100 0 L100 5 C 90 15, 80 21, 68 21 C 52 21, 40 8, 28 0 Z" fill="#00a68c"/></g>
<text x="352.7" y="175" text-anchor="middle" font-family='"Liberation Sans", sans-serif' font-size="33" fill="#000" stroke="#000" stroke-width="0.5">J<tspan dx="15">+</tspan><tspan dx="15" font-weight="normal" stroke-width="0">1</tspan></text>
<g transform="translate(424.0,195.4) scale(1.0600,0.5560)"><rect x="0" y="0" width="100" height="100" fill="url(#wave)"/><path d="M14 0 C 35 20, 55 44, 70 44 C 82 44, 92 38, 100 30 L100 5 C 90 15, 80 21, 68 21 C 52 21, 40 8, 28 0 Z" fill="#00f0c8"/><path d="M28 0 L100 0 L100 5 C 90 15, 80 21, 68 21 C 52 21, 40 8, 28 0 Z" fill="#00a68c"/></g>
<text x="474.9" y="175" text-anchor="middle" font-family='"Liberation Sans", sans-serif' font-size="33" fill="#000" stroke="#000" stroke-width="0.5">J<tspan dx="15">+</tspan><tspan dx="15" font-weight="bold" stroke-width="0.5">2</tspan></text>
<g transform="translate(544.2,195.4) scale(1.0600,0.5560)"><rect x="0" y="0" width="100" height="100" fill="url(#wave)"/><path d="M14 0 C 35 20, 55 44, 70 44 C 82 44, 92 38, 100 30 L100 5 C 90 15, 80 21, 68 21 C 52 21, 40 8, 28 0 Z" fill="#00f0c8"/><path d="M28 0 L100 0 L100 5 C 90 15, 80 21, 68 21 C 52 21, 40 8, 28 0 Z" fill="#00a68c"/></g>
<text x="596.9" y="175" text-anchor="middle" font-family='"Liberation Sans", sans-serif' font-size="33" fill="#000" stroke="#000" stroke-width="0.5">J<tspan dx="15">+</tspan><tspan dx="15" font-weight="normal" stroke-width="0.5">3</tspan></text>
<rect x="1992" y="70" width="416" height="29" rx="7" fill="#000" opacity="0.25" filter="url(#bshadow)"/>
<rect x="1990" y="67.5" width="416" height="29.5" rx="7" fill="#ffffff"/>
<text x="2198" y="89.2" text-anchor="middle" font-family='"Liberation Sans", sans-serif' font-weight="bold" font-size="25" letter-spacing="0.3" fill="#111">LHB-site-L794</text>
<rect x="1993.5" y="108.5" width="410" height="57" rx="10" fill="#ffffff" stroke="#7a7a7a" stroke-width="3.2"/>
<text x="2207.5" y="148.4" text-anchor="middle" xml:space="preserve" font-family='"Liberation Sans", sans-serif' font-size="27" letter-spacing="0.4" fill="#111">Consommation: 74 kWh</text>
<rect x="1993.5" y="178.5" width="410" height="57" rx="10" fill="#ffffff" stroke="#7a7a7a" stroke-width="3.2"/>
<text x="2207.5" y="218.4" text-anchor="middle" xml:space="preserve" font-family='"Liberation Sans", sans-serif' font-size="27" letter-spacing="0.4" fill="#111">P Max :  6 kW</text>
<rect x="1993.5" y="248.5" width="410" height="57" rx="10" fill="#ffffff" stroke="#7a7a7a" stroke-width="3.2"/>
<text x="2207.5" y="288.4" text-anchor="middle" xml:space="preserve" font-family='"Liberation Sans", sans-serif' font-size="27" letter-spacing="0.5" fill="#111">P min : 0 kW</text>
<rect x="1048" y="543" width="522" height="69" rx="10" fill="#ffffff" fill-opacity="0.9"/>
<text x="1314.5" y="589.2" text-anchor="middle" font-family='"Liberation Sans", sans-serif' font-weight="bold" font-size="31" letter-spacing="0.6" fill="#121212">dimanche 12 avril 2026</text>
<rect x="562.2" y="806.6" width="411" height="56.5" rx="10" fill="#ffffff" stroke="#7a7a7a" stroke-width="3.2"/>
<text x="777.6" y="845.4" text-anchor="middle" xml:space="preserve" font-family='"Liberation Sans", sans-serif' font-size="27" letter-spacing="0.4" fill="#111">Consommation: 1 800 kWh</text>
<rect x="1100.6" y="806.6" width="411" height="56.5" rx="10" fill="#ffffff" stroke="#7a7a7a" stroke-width="3.2"/>
<text x="1316.0" y="845.4" text-anchor="middle" xml:space="preserve" font-family='"Liberation Sans", sans-serif' font-size="27" letter-spacing="0.5" fill="#111">P Max :  110 kW</text>
<rect x="1609.6" y="806.6" width="411" height="56.5" rx="10" fill="#ffffff" stroke="#7a7a7a" stroke-width="3.2"/>
<text x="1825.0" y="845.4" text-anchor="middle" xml:space="preserve" font-family='"Liberation Sans", sans-serif' font-size="27" letter-spacing="0.5" fill="#111">P min : 0 kW</text>
<rect x="2322.5" y="1322.7" width="115.3" height="55.3" fill="#ffffff"/>
<path d="M2364 1341.5 A 13.5 13.5 0 1 0 2363.5 1352 L 2350 1352" fill="none" stroke="#0b6fb8" stroke-width="5.6" stroke-linecap="round"/>
<path d="M2368.5 1343.5 C 2368.5 1335.5, 2385 1334.5, 2385 1343 C 2385 1349, 2376 1353, 2370.5 1361.5 L 2386 1361.5" fill="none" stroke="#0b6fb8" stroke-width="5.6" stroke-linejoin="round"/>
<path d="M2392 1324.5 L2383.5 1337.5 L2390 1339.5 L2388.5 1363 L2400 1338.5 L2394 1336.5 Z" fill="#e8572a"/>
<path d="M2398.5 1339 L2424.5 1339 L2419.5 1345 L2393.5 1345 Z" fill="#f29121"/>
<path d="M2396 1348 L2422 1348 L2417 1354 L2391 1354 Z" fill="#f29121"/>
<path d="M2393.5 1357 L2419.5 1357 L2414.5 1363 L2388.5 1363 Z" fill="#f29121"/>
<text x="2393" y="1335" font-family='"Liberation Sans", sans-serif' font-weight="bold" font-size="6.6" fill="#e8572a">FRANCE</text>
<rect x="2340" y="1366.5" width="74" height="1.6" fill="#0b6fb8" opacity="0.55"/>
<rect x="2509.6" y="0" width="1.4" height="1415" fill="#151515"/>
<rect x="0" y="1413.7" width="2511" height="1.3" fill="#151515"/>
</svg></body></html>
